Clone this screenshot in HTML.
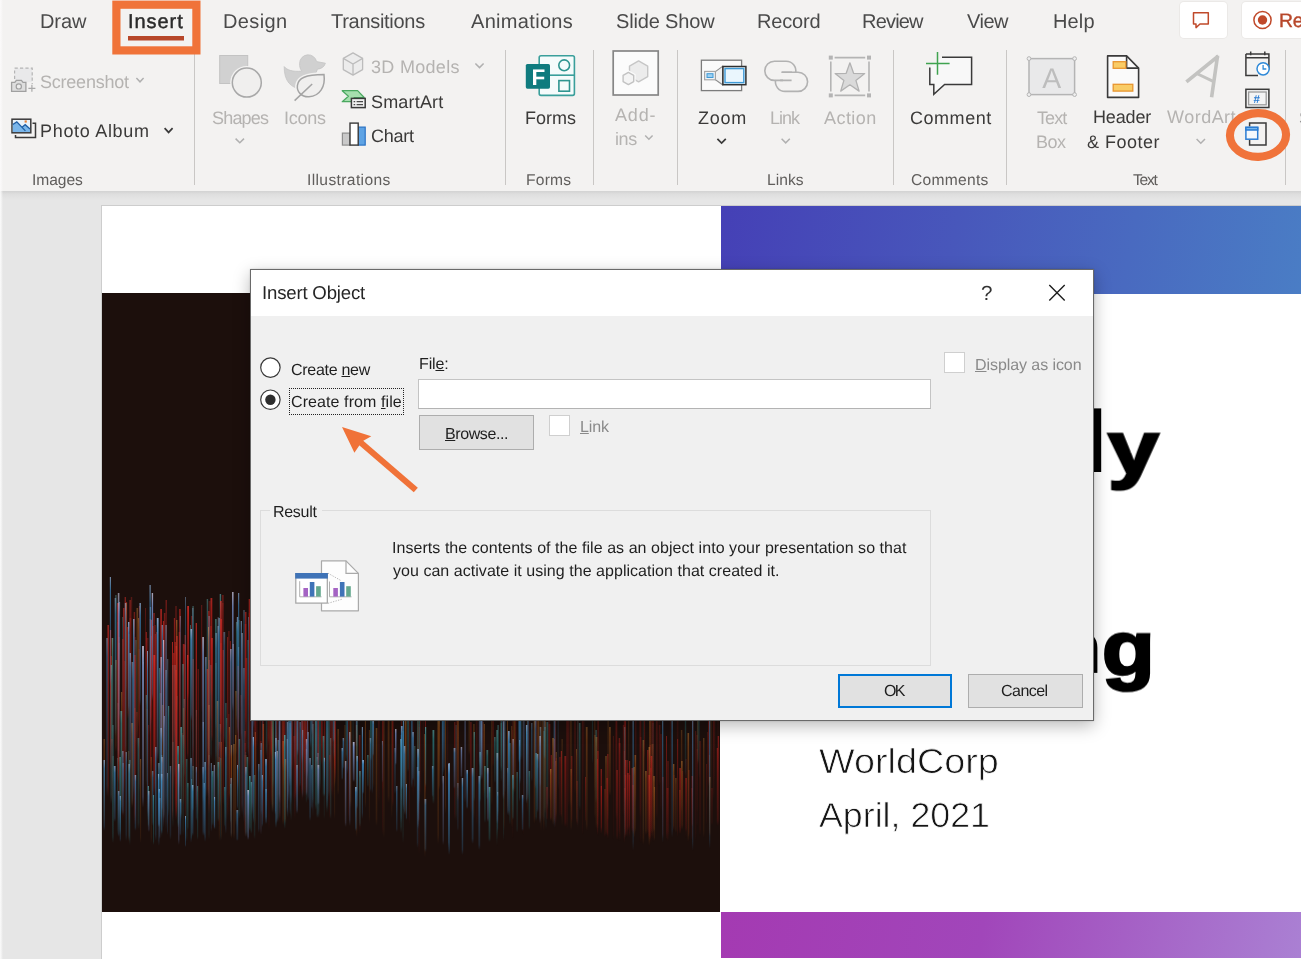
<!DOCTYPE html>
<html lang="en">
<head>
<meta charset="utf-8">
<title>Insert Object</title>
<style>
html,body{margin:0;padding:0;}
body{width:1301px;height:959px;overflow:hidden;position:relative;background:#e6e6e6;font-family:"Liberation Sans",sans-serif;text-rendering:geometricPrecision;}
.t{position:absolute;white-space:pre;display:block;will-change:transform;}
.t u{text-decoration:underline;text-decoration-thickness:1px;text-underline-offset:1px;}
.abs{position:absolute;}
#ribbon{position:absolute;left:0;top:0;width:1301px;height:191px;background:#f3f2f1;}
#ribshadow{position:absolute;left:0;top:191px;width:1301px;height:9px;background:linear-gradient(#d2d2d2,#dedede 35%,#e6e6e6);}
.sep{position:absolute;width:1px;background:#c9c7c5;top:50px;height:135px;}
#slide{position:absolute;left:102px;top:206px;width:1199px;height:753px;background:#fff;overflow:hidden;}
#dialog{position:absolute;left:250px;top:269px;width:844px;height:452px;box-sizing:border-box;background:#f0f0f0;border:1px solid #6a6a6a;box-shadow:0 5px 16px rgba(0,0,0,.27),0 0 2px rgba(0,0,0,.18);}
#dtitle{position:absolute;left:0;top:0;width:842px;height:46px;background:#fff;}
.btn{position:absolute;box-sizing:border-box;background:#e1e1e1;border:1px solid #adadad;}
.cb{position:absolute;box-sizing:border-box;background:#fff;border:1px solid #cfcfcf;}
</style>
</head>
<body>
<div id="ribbon"></div>
<div id="ribshadow"></div>
<div class="abs" style="left:1180px;top:2px;width:47px;height:36px;background:#fff;border-radius:4px;box-shadow:0 0 0 1px #ebe9e7;"></div>
<div class="abs" style="left:1242px;top:2px;width:70px;height:36px;background:#fff;border-radius:4px;box-shadow:0 0 0 1px #ebe9e7;"></div>
<svg class="abs" style="left:0;top:0;will-change:transform;" width="1301" height="191" viewBox="0 0 1301 191" font-family="Liberation Sans, sans-serif">
<!-- top-right buttons -->
<path d="M1193.5 12.8 h14.8 v11.2 h-8.3 l-4 3.6 v-3.6 h-2.5 z" fill="none" stroke="#c0492a" stroke-width="1.5" stroke-linejoin="round"/>
<circle cx="1262.5" cy="20" r="8.6" fill="none" stroke="#c0492a" stroke-width="1.5"/><circle cx="1262.5" cy="20" r="4.7" fill="#c0492a"/>
<!-- Screenshot -->
<g stroke="#a9a9a9" fill="none" stroke-width="1.2">
<rect x="14.6" y="68.2" width="17.6" height="14" fill="#e9e9ea" stroke="none"/>
<path d="M14.6 79 V68.2 H32.2 V84" stroke-dasharray="3.2 2.2" stroke="#b4b4b4"/>
<path d="M11.6 82.3 h3.2 l1.6 -2 h5 l1.6 2 h2.9 v9 h-14.3 z" fill="#dedede" stroke="#a0a0a0" stroke-width="1.3"/>
<circle cx="18.8" cy="86.4" r="2.6" fill="#ececec" stroke="#a0a0a0" stroke-width="1.2"/>
<path d="M28.4 88.3 h7 M31.9 84.8 v7" stroke="#a9a9a9" stroke-width="1.2"/>
</g>
<!-- Photo Album -->
<path d="M15.5 135 v2.6 h20 v-14.4 h-3" fill="none" stroke="#3a3a3a" stroke-width="1.5"/>
<rect x="12" y="119.2" width="18.8" height="13.6" fill="#eaf3fb" stroke="#3a3a3a" stroke-width="1.5"/>
<path d="M12.8 124.5 l4 -2.6 l5.2 5.4 l3.2 -2.6 l4.8 4.2 v3.2 h-17.2 z" fill="#7ab6ea"/>
<path d="M12.8 124.5 l4 -2.6 l8.6 9 M19.5 127.8 M22 127.3 l3.2 -2.6 l4.8 4.2" fill="none" stroke="#1f5fa6" stroke-width="1.3"/>
<rect x="24.6" y="120.4" width="2.2" height="2.2" fill="#e8823a"/>
<!-- Shapes -->
<rect x="219.7" y="55.5" width="28" height="28" fill="#d1d1d1" stroke="#c3c3c3" stroke-width="1"/>
<circle cx="246.8" cy="82.6" r="16.6" fill="#f3f2f1"/>
<circle cx="246.8" cy="82.6" r="14.5" fill="#f0efee" stroke="#a8a8a8" stroke-width="1.5"/>
<!-- Icons (duck + leaf) -->
<path d="M284.2 66.6 c3 3.6 8 5.2 17.6 4.6 c-1.6 -2 -2.4 -4.8 -2.2 -8 a8.6 8.6 0 0 1 17 -1.6 l8.8 1.6 c-1 3.6 -4 5.600 -8 6 c-0.600 2.4 -1.6 4 -3.4 5.400 l-12 14.6 c-11 -1 -18 -8 -17.800 -22.600 z" fill="#d0d0d0" stroke="#c4c4c4" stroke-width="0.8"/>
<path d="M324 74.600 c1.600 12 -4 21.400 -15 22.200 c-7.400 0.400 -12.400 -5 -11.600 -11.400 c1 -7.600 8 -10.600 26.600 -10.800 z" fill="#f0efee" stroke="#f3f2f1" stroke-width="4.5"/>
<path d="M324 74.600 c1.600 12 -4 21.400 -15 22.200 c-7.400 0.400 -12.400 -5 -11.600 -11.400 c1 -7.600 8 -10.600 26.600 -10.800 z" fill="#f0efee" stroke="#a4a4a4" stroke-width="1.5"/>
<path d="M312.200 84 L294.600 100.600" stroke="#a4a4a4" stroke-width="1.5" fill="none"/>
<!-- 3D models cube -->
<path d="M353 52.900 l9.600 5.500 v11.200 l-9.600 5.500 l-9.700 -5.500 v-11.200 z" fill="#ececec" stroke="#bcbcbc" stroke-width="1.3" stroke-linejoin="round"/>
<path d="M343.300 58.400 l9.700 5.600 l9.600 -5.600 M353 64 v11.100" fill="none" stroke="#bcbcbc" stroke-width="1.3"/>
<!-- SmartArt -->
<path d="M342.200 90.700 h15.400 l6.600 6.800 h-10 l-1.600 4.200 h-10.400 l6.200 -5.500 z" fill="#a6dfae" stroke="#4aa860" stroke-width="1.2" stroke-linejoin="round"/>
<rect x="351.400" y="98.400" width="13.800" height="9.200" fill="#f1f1f1" stroke="#3a3a3a" stroke-width="1.5"/>
<path d="M353.600 101.600 h1.600 M356.600 101.600 h6.400 M353.600 104.600 h1.600 M356.600 104.600 h6.400" stroke="#4a4a4a" stroke-width="1.100" fill="none"/>
<!-- Chart -->
<rect x="342.400" y="133.100" width="7.600" height="12" fill="#c9c9c9" stroke="#8e8e8e" stroke-width="1.2"/>
<rect x="358.200" y="127.100" width="7" height="18" fill="#5ea3e4" stroke="#2b72c4" stroke-width="1.2"/>
<rect x="350" y="123.100" width="8.200" height="22" fill="#fff" stroke="#3a3a3a" stroke-width="1.4"/>
<!-- Forms -->
<rect x="539.200" y="55.800" width="35.200" height="39.600" rx="1.800" fill="#f5fbfb" stroke="#3a9f9b" stroke-width="1.600"/>
<path d="M548 75.200 h26.400" stroke="#3a9f9b" stroke-width="1.600"/>
<circle cx="564.200" cy="65.300" r="5.400" fill="none" stroke="#2f9590" stroke-width="1.600"/>
<rect x="558.900" y="80.600" width="10.600" height="10.600" fill="none" stroke="#2f9590" stroke-width="1.600"/>
<rect x="525.800" y="64" width="24.200" height="24.700" rx="1.600" fill="#0f7b7e"/>
<text x="531.600" y="84.500" font-size="22.500" font-weight="bold" fill="#fff">F</text>
<!-- Add-ins -->
<rect x="613.200" y="51" width="45" height="44" fill="#fbfbfb" stroke="#868686" stroke-width="1.700"/>
<path d="M638.600 60.900 l9.100 5.250 v10.500 l-9.100 5.250 l-9.100 -5.250 v-10.500 z" fill="#ececec" stroke="#c6c6c6" stroke-width="1.400" stroke-linejoin="round"/>
<path d="M628.400 72.400 l5.300 3.050 v6.100 l-5.300 3.050 l-5.300 -3.050 v-6.100 z" fill="#f4f4f4" stroke="#fbfbfb" stroke-width="4"/>
<path d="M628.400 72.400 l5.300 3.050 v6.100 l-5.300 3.050 l-5.300 -3.050 v-6.100 z" fill="#f4f4f4" stroke="#c2c2c2" stroke-width="1.400" stroke-linejoin="round"/>
<!-- Zoom -->
<rect x="701.400" y="60.200" width="40.200" height="30.400" fill="#fafafa" stroke="#7c7c7c" stroke-width="1.300"/>
<path d="M715.400 71.600 L722.600 66.400 V84.800 L715.400 79.600 Z" fill="#f0f0f0" stroke="#8e8e8e" stroke-width="1.100"/>
<rect x="704.600" y="71.400" width="10.800" height="8.400" fill="#eef3f7" stroke="#a2a2a2" stroke-width="1.100"/>
<rect x="707" y="73.700" width="6" height="3.800" fill="#9fd0f0" stroke="#3f9ad6" stroke-width="1"/>
<rect x="722.900" y="66.500" width="23" height="18.200" fill="#e8f5fd" stroke="#303030" stroke-width="1.500"/>
<rect x="725" y="68.600" width="18.800" height="14" fill="#eaf6fd" stroke="#3f9ad6" stroke-width="1.400"/>
<!-- Link -->
<g fill="none" stroke="#b2b2b2" stroke-width="1.600">
<path d="M783 80.400 h-8.600 a9.600 9.600 0 0 1 0 -19.200 h11.800 a9.600 9.600 0 0 1 9.400 11.600"/>
<path d="M781.600 72.200 h16.400 a9.600 9.600 0 0 1 0 19.200 h-13 a9.600 9.600 0 0 1 -9.400 -11.400"/>
<path d="M791.600 80.400 h-11.500 M781.600 72.200 h10.400"/>
</g>
<!-- Action -->
<g stroke="#b4b4b4" stroke-width="1.600" fill="none">
<path d="M834.600 57.600 h30.600 M834.600 95.400 h30.600 M830.800 61.400 v30.200 M869 61.400 v30.200"/>
</g>
<g fill="#b4b4b4"><rect x="828.800" y="55.600" width="4" height="4"/><rect x="867" y="55.600" width="4" height="4"/><rect x="828.800" y="93.400" width="4" height="4"/><rect x="867" y="93.400" width="4" height="4"/></g>
<path d="M849.900 62.800 l3.700 10.500 l11.100 0.300 l-8.800 6.800 l3.200 10.700 l-9.200 -6.300 l-9.200 6.300 l3.200 -10.700 l-8.800 -6.800 l11.100 -0.300 z" fill="#dadada" stroke="#b2b2b2" stroke-width="1.300" stroke-linejoin="round"/>
<!-- Comment -->
<path d="M942 57.300 h29.600 v27.200 h-27 l-10.800 9.800 v-9.800 h-4 v-17" fill="#f8f8f8" stroke="#3a3a3a" stroke-width="1.500" stroke-linejoin="miter"/>
<path d="M937.500 52 v22.800 M926 63.500 h23.600" stroke="#3fa34f" stroke-width="1.500" fill="none"/>
<!-- Text Box -->
<rect x="1029" y="58.600" width="45.600" height="36" fill="#e9e9ea" stroke="#b4b4b4" stroke-width="1.500"/>
<g fill="#efefef" stroke="#b4b4b4" stroke-width="1"><circle cx="1029" cy="58.600" r="1.900"/><circle cx="1074.600" cy="58.600" r="1.900"/><circle cx="1029" cy="94.600" r="1.900"/><circle cx="1074.600" cy="94.600" r="1.900"/></g>
<text x="1042.300" y="87.500" font-size="28.400" fill="#bdbdbd">A</text>
<!-- Header & Footer -->
<path d="M1107.600 55.900 h19 l12 12.200 v29.300 h-31 z" fill="#fafafa" stroke="#3a3a3a" stroke-width="1.600" stroke-linejoin="round"/>
<path d="M1126.600 55.900 v12.200 h12" fill="none" stroke="#3a3a3a" stroke-width="1.600" stroke-linejoin="round"/>
<rect x="1113.200" y="61.700" width="12.600" height="6.600" fill="#f9cc66" stroke="#e89530" stroke-width="1.300"/>
<rect x="1113.200" y="84.300" width="19.600" height="6.800" fill="#f9cc66" stroke="#e89530" stroke-width="1.300"/>
<!-- WordArt A -->
<path d="M1218.400 56 L1186.400 81.800 M1217.600 55.600 L1211.600 97.200" stroke="#c3c3c1" stroke-width="3.600" fill="none" stroke-linecap="butt"/><path d="M1196.700 73.500 L1213.700 81.700" stroke="#c3c3c1" stroke-width="3" fill="none"/>
<!-- date/time -->
<path d="M1245.900 53.900 h23 v15.600 M1258 75.600 h-12.100 v-21.700 M1245.900 57.700 h23 M1250.700 51.600 v3.600 M1264.800 51.600 v3.600" fill="none" stroke="#3a3a3a" stroke-width="1.500"/>
<circle cx="1263.100" cy="68.800" r="6.100" fill="#fff" stroke="#2f8ad8" stroke-width="1.500"/>
<path d="M1263.100 65 v4 h3.200" fill="none" stroke="#2f8ad8" stroke-width="1.300"/>
<!-- slide number -->
<rect x="1245.900" y="89.300" width="23" height="18.200" fill="#f4f4f4" stroke="#3a3a3a" stroke-width="1.500"/>
<rect x="1248.600" y="92" width="17.600" height="12.800" fill="#f4f4f4" stroke="#9c9c9c" stroke-width="1.300"/>
<text x="1253.600" y="102.600" font-size="11.500" font-weight="bold" fill="#2b7cd3">#</text>
<!-- object -->
<path d="M1249.600 126.500 v-3.600 h16.400 v22.200 h-16.400 v-5" fill="none" stroke="#3a3a3a" stroke-width="1.500"/>
<rect x="1245.900" y="127.400" width="11.800" height="11.800" fill="#f4f8fc" stroke="#2b7cd3" stroke-width="1.500"/>
<rect x="1245.150" y="126.650" width="13.300" height="4.100" fill="#2b7cd3"/><rect x="1246.600" y="128.100" width="10.400" height="1.100" fill="#7fbdf0"/>
<!-- chevrons -->
<g fill="none" stroke-width="1.500">
<path d="M136.400 78 l3.600 3.800 l3.600 -3.800" stroke="#b0b0b0"/>
<path d="M164.600 128.200 l4 4.200 l4 -4.200" stroke="#3a3a3a" stroke-width="1.700"/>
<path d="M235.600 138.600 l4.200 4.200 l4.200 -4.200" stroke="#b0b0b0"/>
<path d="M475.400 63.400 l4.100 4.200 l4.100 -4.200" stroke="#b0b0b0"/>
<path d="M645.200 135.400 l3.700 3.800 l3.700 -3.800" stroke="#b0b0b0"/>
<path d="M717.400 138.800 l4.200 4.200 l4.200 -4.200" stroke="#3a3a3a" stroke-width="1.700"/>
<path d="M781.600 138.800 l4.100 4.100 l4.100 -4.100" stroke="#b0b0b0"/>
<path d="M1196.600 139 l4.200 4.200 l4.200 -4.200" stroke="#b0b0b0"/>
</g>
</svg>

<div class="sep" style="left:194px;"></div>
<div class="sep" style="left:505px;"></div>
<div class="sep" style="left:593px;"></div>
<div class="sep" style="left:677px;"></div>
<div class="sep" style="left:893px;"></div>
<div class="sep" style="left:1006px;"></div>
<div class="sep" style="left:1285px;"></div>
<span class="t g-ribbon" style="left:40.00px;top:12.20px;font-size:20px;line-height:20px;letter-spacing:-0.076px;color:#4a4a4a;">Draw</span>
<span class="t g-ribbon" style="left:223.00px;top:12.20px;font-size:20px;line-height:20px;letter-spacing:0.373px;color:#4a4a4a;">Design</span>
<span class="t g-ribbon" style="left:330.80px;top:12.20px;font-size:20px;line-height:20px;letter-spacing:-0.287px;color:#4a4a4a;">Transitions</span>
<span class="t g-ribbon" style="left:470.60px;top:12.20px;font-size:20px;line-height:20px;letter-spacing:0.318px;color:#4a4a4a;">Animations</span>
<span class="t g-ribbon" style="left:616.40px;top:12.20px;font-size:20px;line-height:20px;letter-spacing:-0.157px;color:#4a4a4a;">Slide Show</span>
<span class="t g-ribbon" style="left:756.80px;top:12.20px;font-size:20px;line-height:20px;letter-spacing:-0.190px;color:#4a4a4a;">Record</span>
<span class="t g-ribbon" style="left:861.80px;top:12.20px;font-size:20px;line-height:20px;letter-spacing:-0.807px;color:#4a4a4a;">Review</span>
<span class="t g-ribbon" style="left:967.40px;top:12.20px;font-size:20px;line-height:20px;letter-spacing:-0.515px;color:#4a4a4a;">View</span>
<span class="t g-ribbon" style="left:1052.80px;top:12.20px;font-size:20px;line-height:20px;letter-spacing:0.130px;color:#4a4a4a;">Help</span>
<span class="t g-ribbon" style="left:128.00px;top:11.80px;font-size:20px;line-height:20px;letter-spacing:0.947px;color:#2b2b2b;-webkit-text-stroke:0.45px #2b2b2b;">Insert</span>
<span class="t g-ribbon" style="left:1279.00px;top:12.10px;font-size:19.4px;line-height:19.4px;letter-spacing:0.000px;color:#b7472a;-webkit-text-stroke:0.4px #b7472a;letter-spacing:-0.3px;">Record</span>
<span class="t g-ribbon" style="left:40.00px;top:72.50px;font-size:18px;line-height:18px;letter-spacing:-0.228px;color:#b5b3b1;">Screenshot</span>
<span class="t g-ribbon" style="left:39.50px;top:122.00px;font-size:18px;line-height:18px;letter-spacing:0.693px;color:#3b3a39;">Photo Album</span>
<span class="t g-ribbon" style="left:211.75px;top:108.75px;font-size:18px;line-height:18px;letter-spacing:-0.810px;color:#b5b3b1;">Shapes</span>
<span class="t g-ribbon" style="left:284.00px;top:108.75px;font-size:18px;line-height:18px;letter-spacing:-0.256px;color:#b5b3b1;">Icons</span>
<span class="t g-ribbon" style="left:370.75px;top:57.50px;font-size:18px;line-height:18px;letter-spacing:0.308px;color:#b5b3b1;">3D Models</span>
<span class="t g-ribbon" style="left:370.75px;top:92.50px;font-size:18px;line-height:18px;letter-spacing:0.178px;color:#3b3a39;">SmartArt</span>
<span class="t g-ribbon" style="left:370.75px;top:127.00px;font-size:18px;line-height:18px;letter-spacing:-0.254px;color:#3b3a39;">Chart</span>
<span class="t g-ribbon" style="left:524.50px;top:108.75px;font-size:18px;line-height:18px;letter-spacing:0.001px;color:#3b3a39;">Forms</span>
<span class="t g-ribbon" style="left:615.00px;top:106.25px;font-size:18px;line-height:18px;letter-spacing:0.824px;color:#b5b3b1;">Add-</span>
<span class="t g-ribbon" style="left:614.75px;top:130.00px;font-size:18px;line-height:18px;letter-spacing:-0.380px;color:#b5b3b1;">ins</span>
<span class="t g-ribbon" style="left:698.25px;top:108.75px;font-size:18px;line-height:18px;letter-spacing:0.744px;color:#3b3a39;">Zoom</span>
<span class="t g-ribbon" style="left:769.75px;top:108.75px;font-size:18px;line-height:18px;letter-spacing:-1.007px;color:#b5b3b1;">Link</span>
<span class="t g-ribbon" style="left:823.75px;top:108.75px;font-size:18px;line-height:18px;letter-spacing:0.447px;color:#b5b3b1;">Action</span>
<span class="t g-ribbon" style="left:910.00px;top:108.75px;font-size:18px;line-height:18px;letter-spacing:0.538px;color:#3b3a39;">Comment</span>
<span class="t g-ribbon" style="left:1036.75px;top:108.75px;font-size:18px;line-height:18px;letter-spacing:-0.920px;color:#b5b3b1;">Text</span>
<span class="t g-ribbon" style="left:1035.75px;top:133.00px;font-size:18px;line-height:18px;letter-spacing:-0.508px;color:#b5b3b1;">Box</span>
<span class="t g-ribbon" style="left:1093.40px;top:108.20px;font-size:18px;line-height:18px;letter-spacing:-0.148px;color:#3b3a39;">Header</span>
<span class="t g-ribbon" style="left:1087.10px;top:133.00px;font-size:18px;line-height:18px;letter-spacing:0.495px;color:#3b3a39;">&amp; Footer</span>
<span class="t g-ribbon" style="left:1167.40px;top:108.20px;font-size:18px;line-height:18px;letter-spacing:0.487px;color:#b5b3b1;">WordArt</span>
<span class="t g-ribbon" style="left:1298.60px;top:108.60px;font-size:18px;line-height:18px;letter-spacing:0.000px;color:#8f8f8f;">Symbols</span>
<span class="t g-ribbon" style="left:32.00px;top:172.70px;font-size:15.6px;line-height:15.6px;letter-spacing:-0.068px;color:#605e5c;">Images</span>
<span class="t g-ribbon" style="left:307.00px;top:172.70px;font-size:15.6px;line-height:15.6px;letter-spacing:0.369px;color:#605e5c;">Illustrations</span>
<span class="t g-ribbon" style="left:526.00px;top:172.70px;font-size:15.6px;line-height:15.6px;letter-spacing:0.217px;color:#605e5c;">Forms</span>
<span class="t g-ribbon" style="left:766.50px;top:172.70px;font-size:15.6px;line-height:15.6px;letter-spacing:0.036px;color:#605e5c;">Links</span>
<span class="t g-ribbon" style="left:910.75px;top:172.70px;font-size:15.6px;line-height:15.6px;letter-spacing:0.273px;color:#605e5c;">Comments</span>
<span class="t g-ribbon" style="left:1132.50px;top:172.70px;font-size:15.6px;line-height:15.6px;letter-spacing:-1.255px;color:#605e5c;">Text</span>
<div class="abs" style="left:0;top:0;width:3px;height:959px;background:linear-gradient(90deg,#fafafa,rgba(250,250,250,.6) 45%,rgba(250,250,250,0));"></div>
<div class="abs" style="left:101px;top:205px;width:1200px;height:754px;background:#cdcdcd;"></div>
<div id="slide">
  <div class="abs" style="left:619px;top:0;width:580px;height:88px;background:linear-gradient(100deg,#4540b6 0%,#4857bb 40%,#4a7dc5 100%);"></div>
  <div class="abs" style="left:619px;top:706px;width:580px;height:46px;background:linear-gradient(100deg,#a43ab2 0%,#a146ba 45%,#aa80d3 100%);"></div>
  <div class="abs" style="left:0;top:87px;width:618px;height:619px;background:#1c0f0c;overflow:hidden;"><svg width="618" height="619" viewBox="102 293 618 619" style="position:absolute;left:0;top:0"><defs>
<linearGradient id="sr" x1="0" y1="0" x2="0" y2="1"><stop offset="0" stop-color="#e0302a" stop-opacity=".9"/><stop offset=".12" stop-color="#c3201b" stop-opacity="1"/><stop offset=".6" stop-color="#c3201b" stop-opacity=".55"/><stop offset=".93" stop-color="#c3201b" stop-opacity=".3"/><stop offset="1" stop-color="#c3201b" stop-opacity="0"/></linearGradient>
<linearGradient id="sb" x1="0" y1="0" x2="0" y2="1"><stop offset="0" stop-color="#9ec4ee" stop-opacity=".9"/><stop offset=".12" stop-color="#3a86bd" stop-opacity="1"/><stop offset=".6" stop-color="#3a86bd" stop-opacity=".55"/><stop offset=".93" stop-color="#3a86bd" stop-opacity=".3"/><stop offset="1" stop-color="#3a86bd" stop-opacity="0"/></linearGradient>
<linearGradient id="sl" x1="0" y1="0" x2="0" y2="1"><stop offset="0" stop-color="#e6e4ff" stop-opacity=".9"/><stop offset=".12" stop-color="#7f9fe0" stop-opacity="1"/><stop offset=".6" stop-color="#7f9fe0" stop-opacity=".55"/><stop offset=".93" stop-color="#7f9fe0" stop-opacity=".3"/><stop offset="1" stop-color="#7f9fe0" stop-opacity="0"/></linearGradient>
<linearGradient id="st" x1="0" y1="0" x2="0" y2="1"><stop offset="0" stop-color="#5fb0b0" stop-opacity=".9"/><stop offset=".12" stop-color="#2b8084" stop-opacity="1"/><stop offset=".6" stop-color="#2b8084" stop-opacity=".55"/><stop offset=".93" stop-color="#2b8084" stop-opacity=".3"/><stop offset="1" stop-color="#2b8084" stop-opacity="0"/></linearGradient>
<linearGradient id="so" x1="0" y1="0" x2="0" y2="1"><stop offset="0" stop-color="#d88a3a" stop-opacity=".9"/><stop offset=".12" stop-color="#a85a1c" stop-opacity="1"/><stop offset=".6" stop-color="#a85a1c" stop-opacity=".55"/><stop offset=".93" stop-color="#a85a1c" stop-opacity=".3"/><stop offset="1" stop-color="#a85a1c" stop-opacity="0"/></linearGradient>
<linearGradient id="sd" x1="0" y1="0" x2="0" y2="1"><stop offset="0" stop-color="#a02420" stop-opacity=".9"/><stop offset=".12" stop-color="#6e1714" stop-opacity="1"/><stop offset=".6" stop-color="#6e1714" stop-opacity=".55"/><stop offset=".93" stop-color="#6e1714" stop-opacity=".3"/><stop offset="1" stop-color="#6e1714" stop-opacity="0"/></linearGradient>
</defs>
<rect x="642.6" y="709" width="1.2" height="127" fill="url(#st)" opacity="0.20"/>
<rect x="717.3" y="707" width="1.6" height="66" fill="url(#sd)" opacity="0.21"/>
<rect x="691.9" y="698" width="1.6" height="92" fill="url(#sr)" opacity="0.21"/>
<rect x="660.3" y="734" width="1.4" height="77" fill="url(#sr)" opacity="0.22"/>
<rect x="669.8" y="713" width="1.2" height="112" fill="url(#sd)" opacity="0.22"/>
<rect x="712.8" y="712" width="1.6" height="87" fill="url(#sr)" opacity="0.22"/>
<rect x="655.9" y="720" width="1.8" height="99" fill="url(#sr)" opacity="0.23"/>
<rect x="649.6" y="691" width="1.8" height="84" fill="url(#so)" opacity="0.23"/>
<rect x="576.4" y="781" width="1.6" height="44" fill="url(#sr)" opacity="0.25"/>
<rect x="635.3" y="713" width="1" height="89" fill="url(#sr)" opacity="0.25"/>
<rect x="481.6" y="702" width="0.9" height="66" fill="url(#sd)" opacity="0.26"/>
<rect x="681.8" y="771" width="1.4" height="58" fill="url(#sr)" opacity="0.26"/>
<rect x="412.3" y="698" width="1.8" height="99" fill="url(#sd)" opacity="0.26"/>
<rect x="482.7" y="722" width="1.2" height="76" fill="url(#so)" opacity="0.26"/>
<rect x="685.4" y="759" width="1.4" height="79" fill="url(#sd)" opacity="0.26"/>
<rect x="649.5" y="745" width="1.8" height="98" fill="url(#sr)" opacity="0.26"/>
<rect x="594.2" y="735" width="1.6" height="84" fill="url(#so)" opacity="0.27"/>
<rect x="568.2" y="717" width="1.2" height="90" fill="url(#sr)" opacity="0.27"/>
<rect x="570.0" y="707" width="1.8" height="100" fill="url(#so)" opacity="0.27"/>
<rect x="457.6" y="690" width="1.4" height="113" fill="url(#sd)" opacity="0.28"/>
<rect x="539.5" y="693" width="1.8" height="130" fill="url(#so)" opacity="0.28"/>
<rect x="650.0" y="716" width="1.6" height="118" fill="url(#sd)" opacity="0.28"/>
<rect x="666.7" y="788" width="1.8" height="53" fill="url(#sr)" opacity="0.28"/>
<rect x="561.6" y="739" width="1" height="87" fill="url(#so)" opacity="0.28"/>
<rect x="713.5" y="716" width="1.8" height="65" fill="url(#sd)" opacity="0.29"/>
<rect x="541.7" y="714" width="1.4" height="108" fill="url(#so)" opacity="0.29"/>
<rect x="649.8" y="702" width="1.6" height="75" fill="url(#so)" opacity="0.29"/>
<rect x="544.6" y="697" width="0.9" height="78" fill="url(#sr)" opacity="0.29"/>
<rect x="528.1" y="709" width="1.8" height="63" fill="url(#sd)" opacity="0.29"/>
<rect x="708.9" y="755" width="0.9" height="80" fill="url(#so)" opacity="0.29"/>
<rect x="680.9" y="730" width="1.4" height="82" fill="url(#so)" opacity="0.29"/>
<rect x="650.1" y="768" width="1.2" height="72" fill="url(#sr)" opacity="0.30"/>
<rect x="667.3" y="761" width="1.4" height="75" fill="url(#sr)" opacity="0.30"/>
<rect x="555.0" y="761" width="1.2" height="58" fill="url(#so)" opacity="0.30"/>
<rect x="512.3" y="730" width="0.9" height="109" fill="url(#sd)" opacity="0.30"/>
<rect x="482.3" y="703" width="1.8" height="62" fill="url(#sd)" opacity="0.30"/>
<rect x="555.7" y="758" width="0.9" height="65" fill="url(#sr)" opacity="0.31"/>
<rect x="473.1" y="724" width="1.6" height="95" fill="url(#so)" opacity="0.31"/>
<rect x="597.7" y="706" width="1" height="114" fill="url(#sr)" opacity="0.31"/>
<rect x="607.6" y="718" width="1" height="104" fill="url(#so)" opacity="0.31"/>
<rect x="368.9" y="730" width="0.9" height="93" fill="url(#so)" opacity="0.32"/>
<rect x="566.4" y="707" width="1.4" height="122" fill="url(#sr)" opacity="0.32"/>
<rect x="628.8" y="775" width="1.4" height="62" fill="url(#sr)" opacity="0.32"/>
<rect x="652.5" y="723" width="1" height="78" fill="url(#st)" opacity="0.32"/>
<rect x="658.7" y="711" width="0.9" height="75" fill="url(#sd)" opacity="0.32"/>
<rect x="570.9" y="756" width="1.6" height="67" fill="url(#sr)" opacity="0.32"/>
<rect x="540.5" y="727" width="1" height="104" fill="url(#so)" opacity="0.33"/>
<rect x="337.4" y="729" width="1.6" height="66" fill="url(#so)" opacity="0.33"/>
<rect x="348.0" y="701" width="1.2" height="120" fill="url(#sr)" opacity="0.33"/>
<rect x="623.4" y="703" width="1.8" height="86" fill="url(#sd)" opacity="0.33"/>
<rect x="422.5" y="703" width="1.4" height="71" fill="url(#sd)" opacity="0.33"/>
<rect x="643.5" y="704" width="1.4" height="74" fill="url(#sd)" opacity="0.33"/>
<rect x="597.3" y="709" width="1.2" height="127" fill="url(#sd)" opacity="0.33"/>
<rect x="639.5" y="694" width="1.8" height="123" fill="url(#sr)" opacity="0.33"/>
<rect x="615.5" y="707" width="1.8" height="113" fill="url(#sr)" opacity="0.34"/>
<rect x="344.5" y="725" width="0.9" height="101" fill="url(#so)" opacity="0.34"/>
<rect x="707.1" y="732" width="1" height="67" fill="url(#sd)" opacity="0.34"/>
<rect x="496.3" y="730" width="1.2" height="116" fill="url(#st)" opacity="0.34"/>
<rect x="574.4" y="701" width="1.2" height="93" fill="url(#sr)" opacity="0.34"/>
<rect x="696.4" y="735" width="1.2" height="77" fill="url(#sd)" opacity="0.34"/>
<rect x="651.7" y="744" width="1.8" height="94" fill="url(#so)" opacity="0.34"/>
<rect x="372.7" y="714" width="1.6" height="74" fill="url(#so)" opacity="0.34"/>
<rect x="391.3" y="703" width="1" height="115" fill="url(#so)" opacity="0.34"/>
<rect x="673.6" y="775" width="0.9" height="57" fill="url(#sd)" opacity="0.34"/>
<rect x="658.9" y="725" width="1.6" height="60" fill="url(#sd)" opacity="0.34"/>
<rect x="417.2" y="712" width="1.6" height="116" fill="url(#so)" opacity="0.35"/>
<rect x="491.2" y="709" width="1.2" height="97" fill="url(#so)" opacity="0.35"/>
<rect x="591.9" y="694" width="1.2" height="70" fill="url(#st)" opacity="0.35"/>
<rect x="492.5" y="706" width="1.4" height="61" fill="url(#sr)" opacity="0.35"/>
<rect x="595.2" y="730" width="1.8" height="73" fill="url(#st)" opacity="0.35"/>
<rect x="402.3" y="731" width="1.6" height="112" fill="url(#st)" opacity="0.35"/>
<rect x="623.8" y="751" width="1.2" height="92" fill="url(#sr)" opacity="0.35"/>
<rect x="711.5" y="788" width="0.9" height="37" fill="url(#sr)" opacity="0.35"/>
<rect x="676.8" y="706" width="1.6" height="70" fill="url(#sd)" opacity="0.35"/>
<rect x="628.2" y="710" width="1" height="61" fill="url(#so)" opacity="0.35"/>
<rect x="455.5" y="725" width="1.4" height="96" fill="url(#st)" opacity="0.35"/>
<rect x="639.8" y="737" width="1.6" height="106" fill="url(#sd)" opacity="0.35"/>
<rect x="706.1" y="764" width="1" height="61" fill="url(#sd)" opacity="0.36"/>
<rect x="228.1" y="714" width="1.4" height="103" fill="url(#sd)" opacity="0.36"/>
<rect x="128.3" y="751" width="0.9" height="92" fill="url(#so)" opacity="0.36"/>
<rect x="112.1" y="756" width="1.6" height="87" fill="url(#st)" opacity="0.36"/>
<rect x="577.4" y="708" width="1" height="119" fill="url(#st)" opacity="0.36"/>
<rect x="624.8" y="775" width="1.4" height="63" fill="url(#sr)" opacity="0.36"/>
<rect x="612.9" y="736" width="0.9" height="104" fill="url(#sd)" opacity="0.36"/>
<rect x="577.1" y="701" width="1.2" height="128" fill="url(#sd)" opacity="0.36"/>
<rect x="649.1" y="721" width="1" height="99" fill="url(#so)" opacity="0.37"/>
<rect x="710.6" y="712" width="0.9" height="80" fill="url(#so)" opacity="0.37"/>
<rect x="418.4" y="724" width="1.4" height="130" fill="url(#sd)" opacity="0.37"/>
<rect x="697.0" y="702" width="1.4" height="63" fill="url(#so)" opacity="0.37"/>
<rect x="323.8" y="757" width="0.9" height="62" fill="url(#st)" opacity="0.37"/>
<rect x="675.2" y="778" width="1.4" height="55" fill="url(#so)" opacity="0.37"/>
<rect x="280.9" y="693" width="0.9" height="63" fill="url(#sd)" opacity="0.37"/>
<rect x="475.8" y="703" width="1.8" height="123" fill="url(#sd)" opacity="0.37"/>
<rect x="698.8" y="694" width="0.9" height="85" fill="url(#st)" opacity="0.37"/>
<rect x="244.6" y="755" width="1.8" height="82" fill="url(#so)" opacity="0.37"/>
<rect x="644.1" y="697" width="1" height="61" fill="url(#sr)" opacity="0.37"/>
<rect x="447.2" y="707" width="1" height="83" fill="url(#sd)" opacity="0.38"/>
<rect x="526.8" y="715" width="0.9" height="97" fill="url(#so)" opacity="0.38"/>
<rect x="651.8" y="695" width="1.6" height="62" fill="url(#sr)" opacity="0.38"/>
<rect x="604.3" y="789" width="1.2" height="48" fill="url(#sr)" opacity="0.38"/>
<rect x="570.5" y="769" width="1.2" height="61" fill="url(#so)" opacity="0.38"/>
<rect x="684.8" y="713" width="1.4" height="63" fill="url(#st)" opacity="0.38"/>
<rect x="585.0" y="777" width="1" height="45" fill="url(#sr)" opacity="0.38"/>
<rect x="146.5" y="709" width="1.2" height="106" fill="url(#sd)" opacity="0.39"/>
<rect x="219.9" y="758" width="1.4" height="83" fill="url(#st)" opacity="0.39"/>
<rect x="652.3" y="717" width="1.6" height="125" fill="url(#sd)" opacity="0.39"/>
<rect x="352.6" y="692" width="0.9" height="83" fill="url(#st)" opacity="0.39"/>
<rect x="679.4" y="790" width="0.9" height="39" fill="url(#so)" opacity="0.39"/>
<rect x="103.5" y="739" width="1.4" height="86" fill="url(#so)" opacity="0.39"/>
<rect x="303.3" y="693" width="0.9" height="103" fill="url(#so)" opacity="0.39"/>
<rect x="594.4" y="696" width="0.9" height="96" fill="url(#so)" opacity="0.40"/>
<rect x="677.1" y="739" width="1" height="98" fill="url(#sr)" opacity="0.40"/>
<rect x="185.7" y="759" width="1.8" height="83" fill="url(#st)" opacity="0.40"/>
<rect x="159.7" y="693" width="1.8" height="93" fill="url(#st)" opacity="0.40"/>
<rect x="245.1" y="752" width="1" height="66" fill="url(#st)" opacity="0.40"/>
<rect x="595.6" y="737" width="1.8" height="92" fill="url(#so)" opacity="0.40"/>
<rect x="582.1" y="717" width="1" height="118" fill="url(#sd)" opacity="0.40"/>
<rect x="688.4" y="770" width="1" height="67" fill="url(#sr)" opacity="0.40"/>
<rect x="691.6" y="788" width="0.9" height="52" fill="url(#sr)" opacity="0.40"/>
<rect x="618.7" y="738" width="1.4" height="96" fill="url(#sr)" opacity="0.40"/>
<rect x="387.7" y="698" width="1.8" height="105" fill="url(#so)" opacity="0.41"/>
<rect x="218.8" y="757" width="0.9" height="84" fill="url(#so)" opacity="0.41"/>
<rect x="522.9" y="720" width="0.9" height="115" fill="url(#sd)" opacity="0.41"/>
<rect x="201.2" y="605" width="1" height="108" fill="url(#sr)" opacity="0.41"/>
<rect x="161.8" y="705" width="1.8" height="115" fill="url(#so)" opacity="0.41"/>
<rect x="696.7" y="749" width="0.9" height="78" fill="url(#sd)" opacity="0.42"/>
<rect x="699.6" y="741" width="0.9" height="95" fill="url(#sr)" opacity="0.42"/>
<rect x="117.3" y="622" width="1.2" height="158" fill="url(#sd)" opacity="0.42"/>
<rect x="135.1" y="640" width="1.6" height="106" fill="url(#st)" opacity="0.42"/>
<rect x="221.0" y="742" width="0.9" height="98" fill="url(#so)" opacity="0.42"/>
<rect x="543.3" y="709" width="1" height="122" fill="url(#so)" opacity="0.42"/>
<rect x="653.9" y="787" width="1.2" height="54" fill="url(#so)" opacity="0.42"/>
<rect x="208.5" y="755" width="1" height="85" fill="url(#st)" opacity="0.42"/>
<rect x="134.7" y="660" width="0.9" height="124" fill="url(#sd)" opacity="0.42"/>
<rect x="327.4" y="656" width="1" height="145" fill="url(#sr)" opacity="0.42"/>
<rect x="622.8" y="725" width="1.6" height="91" fill="url(#sd)" opacity="0.42"/>
<rect x="142.9" y="662" width="0.9" height="126" fill="url(#so)" opacity="0.42"/>
<rect x="417.0" y="703" width="1.4" height="115" fill="url(#st)" opacity="0.42"/>
<rect x="110.5" y="656" width="1.6" height="96" fill="url(#sr)" opacity="0.42"/>
<rect x="154.1" y="625" width="1.6" height="133" fill="url(#sr)" opacity="0.42"/>
<rect x="290.4" y="716" width="1.4" height="105" fill="url(#st)" opacity="0.43"/>
<rect x="695.2" y="731" width="1" height="110" fill="url(#sd)" opacity="0.43"/>
<rect x="182.9" y="708" width="1.4" height="97" fill="url(#so)" opacity="0.43"/>
<rect x="305.7" y="698" width="1.8" height="78" fill="url(#sd)" opacity="0.43"/>
<rect x="334.2" y="720" width="0.9" height="99" fill="url(#so)" opacity="0.43"/>
<rect x="332.2" y="657" width="0.9" height="90" fill="url(#sr)" opacity="0.43"/>
<rect x="112.1" y="725" width="1.6" height="118" fill="url(#st)" opacity="0.43"/>
<rect x="375.7" y="728" width="1.6" height="98" fill="url(#so)" opacity="0.43"/>
<rect x="154.3" y="634" width="1.6" height="155" fill="url(#sr)" opacity="0.43"/>
<rect x="454.2" y="722" width="1.2" height="98" fill="url(#sr)" opacity="0.43"/>
<rect x="135.9" y="712" width="1.8" height="63" fill="url(#sd)" opacity="0.43"/>
<rect x="378.3" y="721" width="1.2" height="82" fill="url(#sd)" opacity="0.43"/>
<rect x="511.3" y="726" width="1" height="102" fill="url(#so)" opacity="0.43"/>
<rect x="585.8" y="727" width="1.8" height="104" fill="url(#so)" opacity="0.43"/>
<rect x="708.0" y="707" width="1.6" height="80" fill="url(#sr)" opacity="0.44"/>
<rect x="248.8" y="613" width="0.9" height="100" fill="url(#sr)" opacity="0.44"/>
<rect x="332.5" y="627" width="1" height="173" fill="url(#sr)" opacity="0.44"/>
<rect x="535.3" y="706" width="1.8" height="77" fill="url(#sd)" opacity="0.44"/>
<rect x="605.3" y="756" width="1.4" height="79" fill="url(#so)" opacity="0.44"/>
<rect x="279.7" y="716" width="1.8" height="89" fill="url(#sd)" opacity="0.44"/>
<rect x="618.7" y="743" width="1.8" height="98" fill="url(#sd)" opacity="0.44"/>
<rect x="311.9" y="670" width="1" height="124" fill="url(#sd)" opacity="0.44"/>
<rect x="383.4" y="717" width="1" height="121" fill="url(#so)" opacity="0.44"/>
<rect x="503.6" y="711" width="1" height="120" fill="url(#so)" opacity="0.44"/>
<rect x="253.9" y="690" width="1.6" height="90" fill="url(#sd)" opacity="0.44"/>
<rect x="642.6" y="740" width="1.6" height="105" fill="url(#so)" opacity="0.44"/>
<rect x="483.8" y="724" width="1.2" height="70" fill="url(#so)" opacity="0.45"/>
<rect x="134.3" y="708" width="1" height="73" fill="url(#so)" opacity="0.45"/>
<rect x="596.9" y="759" width="1" height="76" fill="url(#sr)" opacity="0.45"/>
<rect x="136.5" y="608" width="1.6" height="131" fill="url(#so)" opacity="0.45"/>
<rect x="685.3" y="778" width="1.6" height="54" fill="url(#sr)" opacity="0.45"/>
<rect x="624.5" y="788" width="0.9" height="42" fill="url(#sr)" opacity="0.45"/>
<rect x="576.0" y="749" width="0.9" height="74" fill="url(#so)" opacity="0.45"/>
<rect x="609.0" y="727" width="1.8" height="69" fill="url(#so)" opacity="0.45"/>
<rect x="321.2" y="653" width="1.6" height="98" fill="url(#sr)" opacity="0.45"/>
<rect x="138.7" y="649" width="1.2" height="143" fill="url(#sr)" opacity="0.46"/>
<rect x="624.0" y="727" width="1.4" height="112" fill="url(#st)" opacity="0.46"/>
<rect x="455.8" y="705" width="1.8" height="96" fill="url(#sd)" opacity="0.46"/>
<rect x="117.6" y="703" width="0.9" height="61" fill="url(#st)" opacity="0.46"/>
<rect x="627.0" y="773" width="1.8" height="58" fill="url(#sr)" opacity="0.46"/>
<rect x="291.3" y="600" width="1" height="176" fill="url(#sr)" opacity="0.46"/>
<rect x="140.1" y="759" width="1" height="84" fill="url(#so)" opacity="0.46"/>
<rect x="681.1" y="761" width="1.6" height="69" fill="url(#so)" opacity="0.46"/>
<rect x="583.3" y="711" width="1" height="68" fill="url(#sd)" opacity="0.46"/>
<rect x="634.5" y="755" width="1.6" height="78" fill="url(#so)" opacity="0.46"/>
<rect x="233.2" y="744" width="1.6" height="95" fill="url(#so)" opacity="0.46"/>
<rect x="546.9" y="722" width="1.5" height="88" fill="url(#st)" opacity="0.46"/>
<rect x="305.8" y="749" width="1.2" height="54" fill="url(#st)" opacity="0.46"/>
<rect x="311.8" y="652" width="1.4" height="149" fill="url(#st)" opacity="0.46"/>
<rect x="133.7" y="612" width="1.4" height="132" fill="url(#sr)" opacity="0.46"/>
<rect x="597.3" y="751" width="1.2" height="78" fill="url(#sr)" opacity="0.46"/>
<rect x="616.4" y="770" width="1.4" height="70" fill="url(#sr)" opacity="0.46"/>
<rect x="227.0" y="637" width="1.2" height="182" fill="url(#sr)" opacity="0.46"/>
<rect x="238.1" y="620" width="1.4" height="104" fill="url(#st)" opacity="0.46"/>
<rect x="255.7" y="649" width="0.9" height="159" fill="url(#sr)" opacity="0.46"/>
<rect x="559.2" y="757" width="1.4" height="59" fill="url(#sd)" opacity="0.47"/>
<rect x="437.4" y="716" width="1.6" height="128" fill="url(#so)" opacity="0.47"/>
<rect x="419.8" y="717" width="1.4" height="79" fill="url(#sd)" opacity="0.47"/>
<rect x="526.3" y="733" width="1" height="69" fill="url(#so)" opacity="0.47"/>
<rect x="146.6" y="638" width="1.8" height="132" fill="url(#sd)" opacity="0.47"/>
<rect x="150.7" y="757" width="1" height="86" fill="url(#so)" opacity="0.47"/>
<rect x="124.4" y="661" width="0.9" height="159" fill="url(#sr)" opacity="0.47"/>
<rect x="578.9" y="723" width="1.6" height="88" fill="url(#st)" opacity="0.47"/>
<rect x="555.8" y="752" width="0.9" height="65" fill="url(#so)" opacity="0.47"/>
<rect x="626.5" y="760" width="1.2" height="77" fill="url(#sr)" opacity="0.47"/>
<rect x="543.5" y="731" width="1.4" height="91" fill="url(#st)" opacity="0.47"/>
<rect x="197.7" y="669" width="1" height="145" fill="url(#sr)" opacity="0.47"/>
<rect x="184.1" y="645" width="1.8" height="136" fill="url(#sd)" opacity="0.47"/>
<rect x="703.3" y="738" width="1" height="100" fill="url(#so)" opacity="0.47"/>
<rect x="208.7" y="601" width="1.8" height="158" fill="url(#sd)" opacity="0.48"/>
<rect x="717.7" y="736" width="1.4" height="90" fill="url(#sr)" opacity="0.48"/>
<rect x="304.0" y="647" width="1.8" height="151" fill="url(#sr)" opacity="0.48"/>
<rect x="130.8" y="597" width="1.4" height="140" fill="url(#sd)" opacity="0.48"/>
<rect x="253.8" y="775" width="1.5" height="64" fill="url(#st)" opacity="0.48"/>
<rect x="163.9" y="613" width="1.6" height="141" fill="url(#sr)" opacity="0.48"/>
<rect x="418.7" y="727" width="1" height="61" fill="url(#sd)" opacity="0.48"/>
<rect x="333.8" y="718" width="1" height="70" fill="url(#so)" opacity="0.48"/>
<rect x="709.1" y="777" width="1.4" height="60" fill="url(#so)" opacity="0.48"/>
<rect x="192.2" y="766" width="1.8" height="45" fill="url(#st)" opacity="0.48"/>
<rect x="207.9" y="611" width="1.8" height="96" fill="url(#sr)" opacity="0.48"/>
<rect x="235.0" y="735" width="1.2" height="90" fill="url(#so)" opacity="0.48"/>
<rect x="235.3" y="691" width="1.4" height="64" fill="url(#so)" opacity="0.49"/>
<rect x="296.3" y="715" width="1" height="73" fill="url(#so)" opacity="0.49"/>
<rect x="400.9" y="721" width="1" height="86" fill="url(#sd)" opacity="0.49"/>
<rect x="600.6" y="769" width="1.4" height="65" fill="url(#sr)" opacity="0.49"/>
<rect x="470.3" y="722" width="1.2" height="91" fill="url(#sr)" opacity="0.49"/>
<rect x="206.7" y="599" width="1.4" height="158" fill="url(#st)" opacity="0.49"/>
<rect x="564.4" y="756" width="1.8" height="71" fill="url(#sr)" opacity="0.49"/>
<rect x="195.9" y="710" width="1" height="63" fill="url(#st)" opacity="0.49"/>
<rect x="554.0" y="739" width="0.9" height="84" fill="url(#sr)" opacity="0.49"/>
<rect x="407.2" y="718" width="1.8" height="54" fill="url(#st)" opacity="0.49"/>
<rect x="292.0" y="608" width="1" height="127" fill="url(#st)" opacity="0.49"/>
<rect x="364.9" y="712" width="1" height="96" fill="url(#so)" opacity="0.49"/>
<rect x="513.3" y="703" width="1" height="92" fill="url(#so)" opacity="0.49"/>
<rect x="545.5" y="722" width="1" height="108" fill="url(#st)" opacity="0.49"/>
<rect x="687.5" y="733" width="1.6" height="109" fill="url(#so)" opacity="0.49"/>
<rect x="697.5" y="702" width="1.2" height="61" fill="url(#st)" opacity="0.49"/>
<rect x="624.4" y="704" width="1.6" height="99" fill="url(#sr)" opacity="0.50"/>
<rect x="414.3" y="746" width="1" height="42" fill="url(#st)" opacity="0.50"/>
<rect x="160.9" y="755" width="1.4" height="82" fill="url(#st)" opacity="0.50"/>
<rect x="245.5" y="658" width="1.8" height="97" fill="url(#sr)" opacity="0.50"/>
<rect x="355.9" y="725" width="1.4" height="112" fill="url(#so)" opacity="0.50"/>
<rect x="691.7" y="776" width="1.2" height="51" fill="url(#sr)" opacity="0.50"/>
<rect x="631.6" y="768" width="1.8" height="64" fill="url(#sr)" opacity="0.50"/>
<rect x="117.3" y="758" width="0.9" height="77" fill="url(#st)" opacity="0.50"/>
<rect x="653.2" y="776" width="1.6" height="56" fill="url(#so)" opacity="0.51"/>
<rect x="552.2" y="738" width="1.8" height="87" fill="url(#so)" opacity="0.51"/>
<rect x="424.9" y="721" width="1" height="72" fill="url(#sr)" opacity="0.51"/>
<rect x="182.5" y="735" width="1.2" height="101" fill="url(#st)" opacity="0.51"/>
<rect x="358.9" y="735" width="1.6" height="98" fill="url(#sd)" opacity="0.51"/>
<rect x="537.9" y="696" width="1.4" height="67" fill="url(#so)" opacity="0.51"/>
<rect x="260.3" y="741" width="1.2" height="94" fill="url(#sd)" opacity="0.51"/>
<rect x="606.5" y="778" width="1.2" height="58" fill="url(#sr)" opacity="0.51"/>
<rect x="528.6" y="771" width="1.5" height="59" fill="url(#st)" opacity="0.51"/>
<rect x="554.7" y="715" width="0.9" height="113" fill="url(#sr)" opacity="0.51"/>
<rect x="666.0" y="736" width="0.9" height="103" fill="url(#sr)" opacity="0.51"/>
<rect x="215.5" y="663" width="0.9" height="168" fill="url(#st)" opacity="0.51"/>
<rect x="228.2" y="631" width="1.4" height="175" fill="url(#sd)" opacity="0.51"/>
<rect x="175.5" y="606" width="1" height="162" fill="url(#sr)" opacity="0.51"/>
<rect x="282.9" y="701" width="1.8" height="86" fill="url(#sd)" opacity="0.51"/>
<rect x="560.8" y="751" width="1.2" height="67" fill="url(#sr)" opacity="0.51"/>
<rect x="544.4" y="712" width="1.4" height="102" fill="url(#so)" opacity="0.51"/>
<rect x="316.3" y="757" width="1.8" height="61" fill="url(#st)" opacity="0.51"/>
<rect x="181.1" y="733" width="1.6" height="82" fill="url(#sd)" opacity="0.52"/>
<rect x="645.1" y="771" width="1.6" height="64" fill="url(#so)" opacity="0.52"/>
<rect x="226.3" y="718" width="0.9" height="74" fill="url(#st)" opacity="0.52"/>
<rect x="537.2" y="703" width="1.4" height="68" fill="url(#so)" opacity="0.52"/>
<rect x="270.8" y="614" width="1" height="144" fill="url(#sr)" opacity="0.52"/>
<rect x="122.3" y="617" width="0.9" height="95" fill="url(#st)" opacity="0.52"/>
<rect x="424.3" y="734" width="1.2" height="123" fill="url(#so)" opacity="0.52"/>
<rect x="328.0" y="710" width="1.8" height="87" fill="url(#st)" opacity="0.52"/>
<rect x="246.6" y="757" width="1.6" height="80" fill="url(#st)" opacity="0.52"/>
<rect x="633.4" y="767" width="1.4" height="71" fill="url(#so)" opacity="0.52"/>
<rect x="210.3" y="665" width="1.6" height="95" fill="url(#st)" opacity="0.52"/>
<rect x="172.5" y="742" width="0.9" height="86" fill="url(#st)" opacity="0.52"/>
<rect x="326.0" y="705" width="1.8" height="108" fill="url(#st)" opacity="0.52"/>
<rect x="503.1" y="722" width="1" height="119" fill="url(#st)" opacity="0.52"/>
<rect x="295.4" y="650" width="1.2" height="153" fill="url(#sr)" opacity="0.53"/>
<rect x="648.5" y="747" width="1.6" height="99" fill="url(#so)" opacity="0.53"/>
<rect x="330.8" y="612" width="1" height="115" fill="url(#sr)" opacity="0.53"/>
<rect x="152.5" y="626" width="1.4" height="152" fill="url(#sr)" opacity="0.53"/>
<rect x="533.7" y="716" width="1.4" height="108" fill="url(#so)" opacity="0.53"/>
<rect x="235.9" y="622" width="1.4" height="99" fill="url(#st)" opacity="0.53"/>
<rect x="544.2" y="727" width="1.5" height="32" fill="url(#st)" opacity="0.53"/>
<rect x="312.2" y="724" width="1.5" height="80" fill="url(#st)" opacity="0.53"/>
<rect x="494.1" y="737" width="1.5" height="46" fill="url(#st)" opacity="0.53"/>
<rect x="550.8" y="755" width="0.9" height="66" fill="url(#sr)" opacity="0.53"/>
<rect x="228.8" y="727" width="1.2" height="71" fill="url(#so)" opacity="0.53"/>
<rect x="124.6" y="597" width="1.4" height="186" fill="url(#sr)" opacity="0.53"/>
<rect x="145.6" y="632" width="1.4" height="99" fill="url(#sr)" opacity="0.54"/>
<rect x="277.3" y="740" width="1.8" height="82" fill="url(#st)" opacity="0.54"/>
<rect x="468.6" y="691" width="1.2" height="64" fill="url(#so)" opacity="0.54"/>
<rect x="129.4" y="600" width="1.4" height="185" fill="url(#sr)" opacity="0.54"/>
<rect x="145.1" y="608" width="0.9" height="159" fill="url(#sd)" opacity="0.54"/>
<rect x="499.8" y="707" width="1.4" height="62" fill="url(#sd)" opacity="0.54"/>
<rect x="457.2" y="708" width="1.6" height="93" fill="url(#so)" opacity="0.54"/>
<rect x="178.7" y="632" width="1.6" height="156" fill="url(#sr)" opacity="0.54"/>
<rect x="382.0" y="719" width="1" height="116" fill="url(#sd)" opacity="0.54"/>
<rect x="304.9" y="609" width="1" height="127" fill="url(#st)" opacity="0.54"/>
<rect x="269.2" y="632" width="1.2" height="151" fill="url(#so)" opacity="0.54"/>
<rect x="287.9" y="667" width="0.9" height="134" fill="url(#sr)" opacity="0.54"/>
<rect x="349.6" y="700" width="1.8" height="108" fill="url(#so)" opacity="0.54"/>
<rect x="192.5" y="659" width="1.4" height="133" fill="url(#sr)" opacity="0.54"/>
<rect x="210.4" y="626" width="1.2" height="95" fill="url(#sr)" opacity="0.54"/>
<rect x="282.3" y="741" width="1.8" height="84" fill="url(#so)" opacity="0.54"/>
<rect x="148.2" y="725" width="0.9" height="86" fill="url(#sd)" opacity="0.54"/>
<rect x="496.5" y="730" width="1.4" height="109" fill="url(#st)" opacity="0.54"/>
<rect x="367.1" y="755" width="1.5" height="32" fill="url(#st)" opacity="0.54"/>
<rect x="662.2" y="777" width="1.4" height="61" fill="url(#sd)" opacity="0.55"/>
<rect x="129.6" y="618" width="1.6" height="92" fill="url(#sd)" opacity="0.55"/>
<rect x="125.9" y="602" width="1.2" height="90" fill="url(#sr)" opacity="0.55"/>
<rect x="400.8" y="735" width="0.9" height="66" fill="url(#st)" opacity="0.55"/>
<rect x="254.8" y="732" width="0.9" height="94" fill="url(#so)" opacity="0.55"/>
<rect x="219.7" y="724" width="1.2" height="82" fill="url(#st)" opacity="0.55"/>
<rect x="521.4" y="672" width="1.2" height="89" fill="url(#st)" opacity="0.55"/>
<rect x="137.6" y="738" width="1.8" height="91" fill="url(#st)" opacity="0.55"/>
<rect x="514.2" y="703" width="1.2" height="90" fill="url(#so)" opacity="0.55"/>
<rect x="275.3" y="715" width="1.4" height="113" fill="url(#st)" opacity="0.55"/>
<rect x="444.9" y="690" width="1.2" height="124" fill="url(#so)" opacity="0.55"/>
<rect x="183.6" y="699" width="1.2" height="79" fill="url(#st)" opacity="0.55"/>
<rect x="548.5" y="724" width="1.8" height="78" fill="url(#sd)" opacity="0.55"/>
<rect x="625.0" y="760" width="1.2" height="76" fill="url(#sr)" opacity="0.55"/>
<rect x="266.8" y="665" width="1.4" height="145" fill="url(#sd)" opacity="0.56"/>
<rect x="404.7" y="719" width="1.8" height="97" fill="url(#so)" opacity="0.56"/>
<rect x="190.1" y="625" width="0.9" height="157" fill="url(#st)" opacity="0.56"/>
<rect x="647.2" y="750" width="1.2" height="84" fill="url(#sr)" opacity="0.56"/>
<rect x="392.2" y="709" width="1.2" height="98" fill="url(#sr)" opacity="0.56"/>
<rect x="648.4" y="775" width="1.8" height="64" fill="url(#sr)" opacity="0.56"/>
<rect x="244.3" y="731" width="1.6" height="101" fill="url(#sd)" opacity="0.56"/>
<rect x="225.4" y="703" width="1" height="119" fill="url(#st)" opacity="0.57"/>
<rect x="497.5" y="725" width="1.2" height="92" fill="url(#st)" opacity="0.57"/>
<rect x="318.1" y="710" width="1.4" height="108" fill="url(#st)" opacity="0.57"/>
<rect x="244.6" y="743" width="1" height="94" fill="url(#sd)" opacity="0.57"/>
<rect x="131.3" y="723" width="1.8" height="85" fill="url(#so)" opacity="0.57"/>
<rect x="408.9" y="697" width="1" height="128" fill="url(#sd)" opacity="0.57"/>
<rect x="244.7" y="624" width="1.6" height="115" fill="url(#sr)" opacity="0.57"/>
<rect x="546.5" y="787" width="1" height="33" fill="url(#sr)" opacity="0.57"/>
<rect x="314.8" y="646" width="1.8" height="138" fill="url(#sr)" opacity="0.57"/>
<rect x="548.3" y="690" width="1.8" height="86" fill="url(#sd)" opacity="0.57"/>
<rect x="229.9" y="641" width="0.9" height="187" fill="url(#sr)" opacity="0.57"/>
<rect x="716.8" y="748" width="1" height="78" fill="url(#sr)" opacity="0.57"/>
<rect x="514.9" y="712" width="1.4" height="68" fill="url(#sd)" opacity="0.57"/>
<rect x="238.4" y="739" width="1.8" height="80" fill="url(#st)" opacity="0.57"/>
<rect x="486.4" y="750" width="1.8" height="50" fill="url(#st)" opacity="0.58"/>
<rect x="600.8" y="786" width="1" height="44" fill="url(#sr)" opacity="0.58"/>
<rect x="218.6" y="742" width="1.8" height="84" fill="url(#sd)" opacity="0.58"/>
<rect x="650.7" y="756" width="1.6" height="78" fill="url(#sr)" opacity="0.58"/>
<rect x="438.7" y="719" width="1.2" height="71" fill="url(#so)" opacity="0.58"/>
<rect x="286.6" y="709" width="1" height="72" fill="url(#sd)" opacity="0.58"/>
<rect x="191.1" y="779" width="1" height="61" fill="url(#st)" opacity="0.58"/>
<rect x="216.7" y="701" width="1.6" height="79" fill="url(#so)" opacity="0.58"/>
<rect x="174.1" y="665" width="1.8" height="113" fill="url(#st)" opacity="0.59"/>
<rect x="679.3" y="768" width="1.6" height="66" fill="url(#sr)" opacity="0.59"/>
<rect x="511.8" y="693" width="1.2" height="63" fill="url(#sd)" opacity="0.59"/>
<rect x="509.3" y="743" width="1.2" height="82" fill="url(#st)" opacity="0.59"/>
<rect x="259.4" y="707" width="1.6" height="66" fill="url(#sd)" opacity="0.59"/>
<rect x="607.4" y="754" width="0.9" height="85" fill="url(#sr)" opacity="0.59"/>
<rect x="632.6" y="785" width="0.9" height="49" fill="url(#sr)" opacity="0.59"/>
<rect x="382.3" y="713" width="1.4" height="79" fill="url(#sd)" opacity="0.59"/>
<rect x="629.1" y="761" width="1" height="68" fill="url(#sr)" opacity="0.59"/>
<rect x="197.0" y="786" width="1.2" height="54" fill="url(#st)" opacity="0.59"/>
<rect x="673.1" y="764" width="1.2" height="66" fill="url(#so)" opacity="0.60"/>
<rect x="301.5" y="627" width="1.6" height="174" fill="url(#sr)" opacity="0.60"/>
<rect x="312.2" y="621" width="1.8" height="120" fill="url(#sr)" opacity="0.60"/>
<rect x="550.0" y="769" width="1.4" height="52" fill="url(#so)" opacity="0.60"/>
<rect x="507.1" y="701" width="0.9" height="112" fill="url(#so)" opacity="0.60"/>
<rect x="276.0" y="615" width="1.2" height="142" fill="url(#st)" opacity="0.60"/>
<rect x="221.9" y="595" width="1.8" height="138" fill="url(#sd)" opacity="0.60"/>
<rect x="330.1" y="738" width="1.2" height="81" fill="url(#st)" opacity="0.60"/>
<rect x="288.9" y="698" width="0.9" height="89" fill="url(#st)" opacity="0.60"/>
<rect x="111.5" y="638" width="0.9" height="106" fill="url(#so)" opacity="0.60"/>
<rect x="191.4" y="616" width="0.9" height="117" fill="url(#sr)" opacity="0.61"/>
<rect x="535.3" y="753" width="1.8" height="68" fill="url(#st)" opacity="0.61"/>
<rect x="125.8" y="603" width="0.9" height="161" fill="url(#so)" opacity="0.61"/>
<rect x="145.8" y="695" width="1" height="91" fill="url(#st)" opacity="0.61"/>
<rect x="314.6" y="628" width="1.4" height="144" fill="url(#sr)" opacity="0.61"/>
<rect x="262.5" y="724" width="1.6" height="67" fill="url(#so)" opacity="0.61"/>
<rect x="400.2" y="739" width="1.8" height="94" fill="url(#st)" opacity="0.61"/>
<rect x="111.2" y="739" width="1.6" height="63" fill="url(#sd)" opacity="0.61"/>
<rect x="500.7" y="723" width="1" height="59" fill="url(#st)" opacity="0.62"/>
<rect x="115.2" y="660" width="1.4" height="92" fill="url(#so)" opacity="0.62"/>
<rect x="230.3" y="784" width="1" height="39" fill="url(#st)" opacity="0.62"/>
<rect x="276.8" y="694" width="0.9" height="112" fill="url(#sd)" opacity="0.62"/>
<rect x="179.1" y="609" width="1.6" height="181" fill="url(#sr)" opacity="0.62"/>
<rect x="129.2" y="760" width="1.2" height="85" fill="url(#st)" opacity="0.62"/>
<rect x="133.9" y="655" width="1.8" height="170" fill="url(#sr)" opacity="0.62"/>
<rect x="262.4" y="656" width="1.4" height="168" fill="url(#sr)" opacity="0.62"/>
<rect x="484.2" y="766" width="1.5" height="57" fill="url(#st)" opacity="0.63"/>
<rect x="168.0" y="706" width="1.2" height="110" fill="url(#st)" opacity="0.63"/>
<rect x="516.6" y="772" width="1" height="61" fill="url(#st)" opacity="0.63"/>
<rect x="134.6" y="637" width="0.9" height="183" fill="url(#sd)" opacity="0.63"/>
<rect x="322.2" y="625" width="1" height="146" fill="url(#sr)" opacity="0.63"/>
<rect x="290.7" y="626" width="1.6" height="159" fill="url(#sr)" opacity="0.64"/>
<rect x="512.0" y="775" width="1.8" height="45" fill="url(#st)" opacity="0.64"/>
<rect x="250.6" y="782" width="1.5" height="52" fill="url(#st)" opacity="0.64"/>
<rect x="310.5" y="619" width="1.2" height="145" fill="url(#st)" opacity="0.64"/>
<rect x="182.8" y="644" width="1.8" height="107" fill="url(#sr)" opacity="0.64"/>
<rect x="317.3" y="676" width="1.8" height="92" fill="url(#sd)" opacity="0.64"/>
<rect x="182.3" y="664" width="1.4" height="105" fill="url(#st)" opacity="0.64"/>
<rect x="293.7" y="632" width="1.2" height="131" fill="url(#sr)" opacity="0.65"/>
<rect x="118.4" y="643" width="1" height="142" fill="url(#so)" opacity="0.65"/>
<rect x="345.5" y="673" width="1.8" height="87" fill="url(#st)" opacity="0.65"/>
<rect x="119.2" y="757" width="1.8" height="78" fill="url(#st)" opacity="0.65"/>
<rect x="128.3" y="634" width="0.9" height="169" fill="url(#st)" opacity="0.65"/>
<rect x="208.1" y="705" width="1.6" height="61" fill="url(#so)" opacity="0.66"/>
<rect x="244.9" y="612" width="1.6" height="113" fill="url(#sr)" opacity="0.66"/>
<rect x="237.5" y="666" width="1.4" height="123" fill="url(#sr)" opacity="0.66"/>
<rect x="271.9" y="677" width="1.6" height="136" fill="url(#st)" opacity="0.66"/>
<rect x="121.3" y="692" width="0.9" height="116" fill="url(#so)" opacity="0.66"/>
<rect x="247.5" y="640" width="1.2" height="115" fill="url(#st)" opacity="0.66"/>
<rect x="284.5" y="759" width="1.6" height="64" fill="url(#so)" opacity="0.67"/>
<rect x="240.6" y="695" width="0.9" height="118" fill="url(#sd)" opacity="0.67"/>
<rect x="220.1" y="643" width="1.4" height="118" fill="url(#sr)" opacity="0.67"/>
<rect x="107.4" y="625" width="1.6" height="173" fill="url(#sr)" opacity="0.67"/>
<rect x="322.7" y="736" width="1.8" height="61" fill="url(#st)" opacity="0.67"/>
<rect x="275.7" y="652" width="1.2" height="134" fill="url(#sr)" opacity="0.67"/>
<rect x="138.2" y="618" width="0.9" height="109" fill="url(#so)" opacity="0.68"/>
<rect x="230.9" y="745" width="1.2" height="94" fill="url(#so)" opacity="0.68"/>
<rect x="329.4" y="755" width="0.9" height="64" fill="url(#sd)" opacity="0.68"/>
<rect x="208.3" y="660" width="1.4" height="154" fill="url(#sr)" opacity="0.68"/>
<rect x="219.7" y="594" width="1.4" height="130" fill="url(#st)" opacity="0.68"/>
<rect x="120.4" y="711" width="1.8" height="103" fill="url(#st)" opacity="0.68"/>
<rect x="319.4" y="610" width="1.6" height="181" fill="url(#st)" opacity="0.68"/>
<rect x="176.4" y="696" width="0.9" height="91" fill="url(#st)" opacity="0.69"/>
<rect x="276.8" y="621" width="1" height="108" fill="url(#sr)" opacity="0.69"/>
<rect x="153.2" y="613" width="1.8" height="98" fill="url(#sd)" opacity="0.69"/>
<rect x="211.7" y="771" width="1.8" height="55" fill="url(#st)" opacity="0.69"/>
<rect x="122.4" y="639" width="0.9" height="183" fill="url(#sr)" opacity="0.69"/>
<rect x="293.5" y="736" width="1.8" height="64" fill="url(#sd)" opacity="0.69"/>
<rect x="271.6" y="700" width="1.8" height="112" fill="url(#so)" opacity="0.69"/>
<rect x="115.5" y="595" width="0.9" height="143" fill="url(#st)" opacity="0.69"/>
<rect x="127.2" y="627" width="1.8" height="92" fill="url(#sr)" opacity="0.70"/>
<rect x="282.6" y="698" width="0.9" height="73" fill="url(#so)" opacity="0.70"/>
<rect x="156.4" y="632" width="1.2" height="135" fill="url(#sr)" opacity="0.70"/>
<rect x="254.7" y="656" width="1.4" height="94" fill="url(#sr)" opacity="0.70"/>
<rect x="150.2" y="620" width="1.8" height="104" fill="url(#sr)" opacity="0.70"/>
<rect x="323.9" y="653" width="1.4" height="129" fill="url(#sr)" opacity="0.70"/>
<rect x="217.5" y="762" width="1.8" height="60" fill="url(#st)" opacity="0.71"/>
<rect x="172.2" y="665" width="1.2" height="154" fill="url(#st)" opacity="0.71"/>
<rect x="208.0" y="627" width="1" height="170" fill="url(#so)" opacity="0.71"/>
<rect x="175.7" y="646" width="1.4" height="172" fill="url(#sr)" opacity="0.71"/>
<rect x="295.0" y="674" width="0.9" height="124" fill="url(#sr)" opacity="0.71"/>
<rect x="251.1" y="619" width="1.2" height="104" fill="url(#sd)" opacity="0.71"/>
<rect x="359.2" y="771" width="1.5" height="56" fill="url(#st)" opacity="0.72"/>
<rect x="308.2" y="615" width="0.9" height="157" fill="url(#sd)" opacity="0.72"/>
<rect x="192.6" y="606" width="0.9" height="147" fill="url(#st)" opacity="0.72"/>
<rect x="479.4" y="752" width="1.5" height="50" fill="url(#st)" opacity="0.72"/>
<rect x="370.0" y="706" width="1.8" height="55" fill="url(#st)" opacity="0.73"/>
<rect x="173.9" y="618" width="0.9" height="121" fill="url(#sr)" opacity="0.73"/>
<rect x="159.2" y="668" width="1" height="164" fill="url(#st)" opacity="0.73"/>
<rect x="268.5" y="683" width="0.9" height="147" fill="url(#sd)" opacity="0.73"/>
<rect x="147.8" y="786" width="1.2" height="41" fill="url(#st)" opacity="0.74"/>
<rect x="326.7" y="590" width="1" height="136" fill="url(#sr)" opacity="0.74"/>
<rect x="331.3" y="638" width="1" height="158" fill="url(#sr)" opacity="0.74"/>
<rect x="248.7" y="599" width="1.8" height="172" fill="url(#sr)" opacity="0.75"/>
<rect x="172.0" y="642" width="1" height="180" fill="url(#sr)" opacity="0.75"/>
<rect x="432.5" y="730" width="1.8" height="74" fill="url(#st)" opacity="0.75"/>
<rect x="224.3" y="787" width="1" height="40" fill="url(#st)" opacity="0.76"/>
<rect x="272.4" y="664" width="1.4" height="124" fill="url(#st)" opacity="0.76"/>
<rect x="123.2" y="608" width="1.2" height="185" fill="url(#sr)" opacity="0.76"/>
<rect x="210.5" y="598" width="1.8" height="98" fill="url(#sr)" opacity="0.76"/>
<rect x="418.7" y="714" width="1" height="90" fill="url(#st)" opacity="0.77"/>
<rect x="262.0" y="630" width="0.9" height="102" fill="url(#sr)" opacity="0.77"/>
<rect x="175.2" y="670" width="1.8" height="151" fill="url(#sr)" opacity="0.77"/>
<rect x="150.3" y="636" width="1.2" height="129" fill="url(#sr)" opacity="0.77"/>
<rect x="222.6" y="650" width="1.2" height="155" fill="url(#sr)" opacity="0.77"/>
<rect x="321.0" y="649" width="1" height="116" fill="url(#sr)" opacity="0.77"/>
<rect x="162.9" y="621" width="1" height="123" fill="url(#sr)" opacity="0.77"/>
<rect x="187.4" y="783" width="1" height="47" fill="url(#st)" opacity="0.78"/>
<rect x="176.3" y="620" width="1" height="94" fill="url(#so)" opacity="0.78"/>
<rect x="278.9" y="685" width="1.6" height="138" fill="url(#sd)" opacity="0.78"/>
<rect x="160.3" y="609" width="1.6" height="151" fill="url(#sr)" opacity="0.78"/>
<rect x="334.0" y="653" width="1.4" height="119" fill="url(#sr)" opacity="0.78"/>
<rect x="480.6" y="717" width="1" height="52" fill="url(#st)" opacity="0.78"/>
<rect x="301.3" y="648" width="1.2" height="147" fill="url(#sr)" opacity="0.79"/>
<rect x="174.7" y="642" width="0.9" height="167" fill="url(#sr)" opacity="0.79"/>
<rect x="118.4" y="637" width="1" height="184" fill="url(#sr)" opacity="0.79"/>
<rect x="294.1" y="637" width="1.4" height="182" fill="url(#sd)" opacity="0.79"/>
<rect x="253.8" y="610" width="0.9" height="159" fill="url(#sd)" opacity="0.79"/>
<rect x="304.3" y="667" width="1" height="109" fill="url(#sr)" opacity="0.79"/>
<rect x="306.4" y="670" width="1" height="125" fill="url(#sr)" opacity="0.80"/>
<rect x="110.3" y="665" width="1.6" height="139" fill="url(#st)" opacity="0.80"/>
<rect x="268.1" y="621" width="1" height="91" fill="url(#sd)" opacity="0.80"/>
<rect x="298.5" y="644" width="1" height="152" fill="url(#sr)" opacity="0.80"/>
<rect x="267.8" y="626" width="1.6" height="120" fill="url(#sr)" opacity="0.80"/>
<rect x="149.8" y="619" width="1.4" height="164" fill="url(#sr)" opacity="0.80"/>
<rect x="184.7" y="635" width="0.9" height="185" fill="url(#sr)" opacity="0.80"/>
<rect x="211.2" y="638" width="1.6" height="104" fill="url(#sr)" opacity="0.80"/>
<rect x="138.9" y="606" width="1" height="161" fill="url(#sd)" opacity="0.81"/>
<rect x="283.6" y="650" width="1.8" height="122" fill="url(#sr)" opacity="0.81"/>
<rect x="215.3" y="619" width="1.2" height="111" fill="url(#st)" opacity="0.81"/>
<rect x="314.9" y="716" width="1.8" height="94" fill="url(#st)" opacity="0.82"/>
<rect x="356.5" y="717" width="1" height="80" fill="url(#st)" opacity="0.82"/>
<rect x="220.1" y="601" width="1.6" height="134" fill="url(#sr)" opacity="0.82"/>
<rect x="176.4" y="636" width="1.2" height="172" fill="url(#sr)" opacity="0.82"/>
<rect x="488.6" y="787" width="1.8" height="55" fill="url(#st)" opacity="0.82"/>
<rect x="287.8" y="623" width="1" height="158" fill="url(#st)" opacity="0.83"/>
<rect x="165.6" y="600" width="1.2" height="186" fill="url(#sd)" opacity="0.83"/>
<rect x="304.7" y="635" width="0.9" height="132" fill="url(#sr)" opacity="0.83"/>
<rect x="265.7" y="605" width="1.6" height="152" fill="url(#st)" opacity="0.83"/>
<rect x="220.5" y="619" width="1.2" height="148" fill="url(#sr)" opacity="0.84"/>
<rect x="317.4" y="676" width="1.4" height="115" fill="url(#sr)" opacity="0.84"/>
<rect x="316.9" y="614" width="1.8" height="98" fill="url(#sr)" opacity="0.84"/>
<rect x="302.3" y="622" width="1.6" height="137" fill="url(#sr)" opacity="0.84"/>
<rect x="282.0" y="648" width="1.4" height="118" fill="url(#sr)" opacity="0.84"/>
<rect x="195.7" y="623" width="1.2" height="185" fill="url(#sr)" opacity="0.84"/>
<rect x="112.2" y="638" width="1" height="147" fill="url(#st)" opacity="0.84"/>
<rect x="153.1" y="795" width="1" height="50" fill="url(#st)" opacity="0.85"/>
<rect x="270.7" y="660" width="0.9" height="146" fill="url(#sr)" opacity="0.85"/>
<rect x="334.4" y="614" width="1.6" height="170" fill="url(#sr)" opacity="0.85"/>
<rect x="173.4" y="653" width="0.9" height="136" fill="url(#sr)" opacity="0.85"/>
<rect x="270.4" y="632" width="1.6" height="125" fill="url(#sr)" opacity="0.86"/>
<rect x="177.3" y="746" width="1.5" height="82" fill="url(#st)" opacity="0.86"/>
<rect x="329.7" y="620" width="1" height="151" fill="url(#sr)" opacity="0.86"/>
<rect x="473.7" y="732" width="1" height="70" fill="url(#st)" opacity="0.86"/>
<rect x="276.3" y="651" width="1" height="120" fill="url(#sd)" opacity="0.86"/>
<rect x="284.0" y="735" width="1.5" height="94" fill="url(#st)" opacity="0.86"/>
<rect x="109.9" y="630" width="1.2" height="140" fill="url(#sr)" opacity="0.86"/>
<rect x="222.4" y="603" width="0.9" height="174" fill="url(#sd)" opacity="0.86"/>
<rect x="256.9" y="655" width="0.9" height="92" fill="url(#sd)" opacity="0.87"/>
<rect x="180.4" y="727" width="1.5" height="92" fill="url(#st)" opacity="0.88"/>
<rect x="249.1" y="776" width="1.5" height="55" fill="url(#st)" opacity="0.88"/>
<rect x="425.0" y="727" width="1.2" height="60" fill="url(#st)" opacity="0.89"/>
<rect x="117.3" y="603" width="1.6" height="180" fill="url(#sr)" opacity="0.89"/>
<rect x="327.2" y="597" width="1" height="121" fill="url(#st)" opacity="0.89"/>
<rect x="187.2" y="606" width="1.8" height="93" fill="url(#sr)" opacity="0.89"/>
<rect x="291.5" y="662" width="1" height="108" fill="url(#sr)" opacity="0.89"/>
<rect x="206.8" y="669" width="0.9" height="128" fill="url(#sr)" opacity="0.90"/>
<rect x="153.4" y="655" width="1.8" height="142" fill="url(#sr)" opacity="0.90"/>
<rect x="187.0" y="655" width="1.4" height="105" fill="url(#sr)" opacity="0.90"/>
<rect x="289.6" y="612" width="1.8" height="121" fill="url(#sd)" opacity="0.90"/>
<rect x="500.7" y="692" width="1.2" height="80" fill="url(#st)" opacity="0.90"/>
<rect x="557.7" y="696" width="1" height="94" fill="url(#sb)" opacity="0.26"/>
<rect x="504.5" y="713" width="1.2" height="80" fill="url(#sb)" opacity="0.32"/>
<rect x="523.0" y="712" width="1.8" height="91" fill="url(#sb)" opacity="0.34"/>
<rect x="260.2" y="750" width="1.6" height="85" fill="url(#sb)" opacity="0.41"/>
<rect x="330.5" y="608" width="0.9" height="125" fill="url(#sb)" opacity="0.42"/>
<rect x="165.2" y="625" width="1.8" height="183" fill="url(#sb)" opacity="0.42"/>
<rect x="223.4" y="632" width="1.8" height="112" fill="url(#sb)" opacity="0.43"/>
<rect x="192.2" y="608" width="1.2" height="180" fill="url(#sb)" opacity="0.43"/>
<rect x="217.7" y="617" width="0.9" height="190" fill="url(#sb)" opacity="0.43"/>
<rect x="232.5" y="644" width="1.4" height="113" fill="url(#sl)" opacity="0.44"/>
<rect x="539.7" y="727" width="1.4" height="60" fill="url(#sb)" opacity="0.45"/>
<rect x="312.4" y="655" width="1" height="162" fill="url(#sb)" opacity="0.45"/>
<rect x="311.0" y="765" width="1.5" height="44" fill="url(#sb)" opacity="0.45"/>
<rect x="169.7" y="766" width="1.5" height="74" fill="url(#sb)" opacity="0.45"/>
<rect x="215.3" y="633" width="1.8" height="127" fill="url(#sb)" opacity="0.45"/>
<rect x="276.2" y="751" width="1.8" height="72" fill="url(#sl)" opacity="0.46"/>
<rect x="464.5" y="713" width="1.2" height="90" fill="url(#sl)" opacity="0.46"/>
<rect x="355.8" y="711" width="1.5" height="36" fill="url(#sl)" opacity="0.46"/>
<rect x="553.6" y="711" width="1.8" height="117" fill="url(#sb)" opacity="0.46"/>
<rect x="519.7" y="697" width="1.6" height="63" fill="url(#sb)" opacity="0.46"/>
<rect x="158.9" y="798" width="1.5" height="41" fill="url(#sl)" opacity="0.47"/>
<rect x="416.8" y="767" width="1.5" height="81" fill="url(#sb)" opacity="0.47"/>
<rect x="496.4" y="753" width="1.8" height="71" fill="url(#sl)" opacity="0.47"/>
<rect x="248.1" y="617" width="0.9" height="145" fill="url(#sb)" opacity="0.48"/>
<rect x="478.8" y="689" width="1" height="77" fill="url(#sl)" opacity="0.48"/>
<rect x="147.9" y="791" width="1.8" height="41" fill="url(#sl)" opacity="0.48"/>
<rect x="394.4" y="748" width="1.2" height="46" fill="url(#sb)" opacity="0.48"/>
<rect x="125.5" y="752" width="1.5" height="89" fill="url(#sb)" opacity="0.48"/>
<rect x="381.9" y="741" width="1" height="42" fill="url(#sb)" opacity="0.49"/>
<rect x="167.3" y="659" width="0.9" height="167" fill="url(#sb)" opacity="0.49"/>
<rect x="185.1" y="597" width="0.9" height="116" fill="url(#sb)" opacity="0.49"/>
<rect x="167.0" y="773" width="1" height="62" fill="url(#sb)" opacity="0.49"/>
<rect x="190.2" y="758" width="1.8" height="85" fill="url(#sb)" opacity="0.49"/>
<rect x="157.9" y="763" width="1.8" height="83" fill="url(#sb)" opacity="0.49"/>
<rect x="512.4" y="739" width="1.5" height="52" fill="url(#sl)" opacity="0.49"/>
<rect x="531.2" y="723" width="1.2" height="59" fill="url(#sb)" opacity="0.49"/>
<rect x="371.8" y="714" width="1.2" height="80" fill="url(#sb)" opacity="0.50"/>
<rect x="217.4" y="626" width="1.6" height="138" fill="url(#sb)" opacity="0.50"/>
<rect x="396.0" y="786" width="1.5" height="46" fill="url(#sb)" opacity="0.50"/>
<rect x="497.2" y="792" width="1" height="39" fill="url(#sb)" opacity="0.50"/>
<rect x="285.5" y="622" width="1.8" height="150" fill="url(#sb)" opacity="0.50"/>
<rect x="457.4" y="783" width="1" height="48" fill="url(#sb)" opacity="0.50"/>
<rect x="534.6" y="721" width="1.8" height="68" fill="url(#sb)" opacity="0.50"/>
<rect x="208.5" y="616" width="1.2" height="188" fill="url(#sb)" opacity="0.50"/>
<rect x="258.0" y="764" width="1.5" height="69" fill="url(#sb)" opacity="0.50"/>
<rect x="151.9" y="771" width="1.5" height="55" fill="url(#sb)" opacity="0.51"/>
<rect x="369.7" y="738" width="1.5" height="54" fill="url(#sb)" opacity="0.51"/>
<rect x="333.2" y="641" width="1.6" height="119" fill="url(#sb)" opacity="0.52"/>
<rect x="114.6" y="598" width="1.6" height="138" fill="url(#sb)" opacity="0.52"/>
<rect x="118.7" y="602" width="1.4" height="119" fill="url(#sb)" opacity="0.52"/>
<rect x="299.5" y="722" width="1.4" height="65" fill="url(#sb)" opacity="0.52"/>
<rect x="289.8" y="626" width="1.2" height="143" fill="url(#sb)" opacity="0.52"/>
<rect x="270.9" y="642" width="1" height="102" fill="url(#sb)" opacity="0.53"/>
<rect x="204.9" y="657" width="1.8" height="141" fill="url(#sb)" opacity="0.53"/>
<rect x="163.8" y="716" width="1.2" height="103" fill="url(#sb)" opacity="0.53"/>
<rect x="296.3" y="765" width="1.5" height="48" fill="url(#sl)" opacity="0.54"/>
<rect x="294.1" y="606" width="1.2" height="161" fill="url(#sb)" opacity="0.54"/>
<rect x="317.5" y="753" width="0.9" height="65" fill="url(#sb)" opacity="0.54"/>
<rect x="410.9" y="712" width="1.8" height="76" fill="url(#sb)" opacity="0.54"/>
<rect x="179.8" y="616" width="0.9" height="110" fill="url(#sb)" opacity="0.55"/>
<rect x="632.5" y="715" width="1.3" height="136" fill="url(#sb)" opacity="0.55"/>
<rect x="671.5" y="715" width="1.3" height="123" fill="url(#sb)" opacity="0.55"/>
<rect x="662.0" y="715" width="1.3" height="128" fill="url(#sb)" opacity="0.55"/>
<rect x="709.0" y="715" width="1.3" height="134" fill="url(#sb)" opacity="0.55"/>
<rect x="692.0" y="715" width="1.3" height="136" fill="url(#sb)" opacity="0.55"/>
<rect x="265.2" y="789" width="1.8" height="35" fill="url(#sb)" opacity="0.55"/>
<rect x="261.7" y="616" width="0.9" height="187" fill="url(#sb)" opacity="0.55"/>
<rect x="275.3" y="664" width="1" height="102" fill="url(#sb)" opacity="0.55"/>
<rect x="149.9" y="607" width="1.2" height="101" fill="url(#sb)" opacity="0.56"/>
<rect x="106.3" y="638" width="1.4" height="158" fill="url(#sb)" opacity="0.56"/>
<rect x="507.2" y="768" width="1" height="47" fill="url(#sb)" opacity="0.56"/>
<rect x="131.6" y="662" width="1.8" height="144" fill="url(#sb)" opacity="0.56"/>
<rect x="349.0" y="732" width="1.5" height="94" fill="url(#sl)" opacity="0.56"/>
<rect x="539.3" y="736" width="1.5" height="88" fill="url(#sl)" opacity="0.56"/>
<rect x="442.6" y="776" width="1.2" height="69" fill="url(#sl)" opacity="0.57"/>
<rect x="122.6" y="763" width="1" height="53" fill="url(#sb)" opacity="0.57"/>
<rect x="213.7" y="765" width="1.2" height="64" fill="url(#sl)" opacity="0.57"/>
<rect x="317.5" y="765" width="1.8" height="40" fill="url(#sl)" opacity="0.57"/>
<rect x="502.6" y="712" width="1.8" height="88" fill="url(#sl)" opacity="0.57"/>
<rect x="418.3" y="771" width="1" height="51" fill="url(#sl)" opacity="0.57"/>
<rect x="424.5" y="799" width="1.8" height="53" fill="url(#sb)" opacity="0.57"/>
<rect x="527.2" y="694" width="1.6" height="106" fill="url(#sb)" opacity="0.58"/>
<rect x="305.8" y="739" width="1.5" height="57" fill="url(#sl)" opacity="0.58"/>
<rect x="443.9" y="704" width="0.9" height="67" fill="url(#sb)" opacity="0.58"/>
<rect x="344.9" y="761" width="1.5" height="66" fill="url(#sl)" opacity="0.58"/>
<rect x="203.5" y="783" width="1.5" height="53" fill="url(#sb)" opacity="0.58"/>
<rect x="431.9" y="766" width="1.5" height="31" fill="url(#sb)" opacity="0.58"/>
<rect x="204.2" y="762" width="1.8" height="80" fill="url(#sb)" opacity="0.58"/>
<rect x="236.4" y="810" width="1.8" height="31" fill="url(#sb)" opacity="0.59"/>
<rect x="400.5" y="739" width="1.2" height="84" fill="url(#sb)" opacity="0.59"/>
<rect x="210.8" y="763" width="1" height="69" fill="url(#sb)" opacity="0.59"/>
<rect x="202.4" y="767" width="1.5" height="69" fill="url(#sb)" opacity="0.59"/>
<rect x="243.5" y="610" width="1" height="90" fill="url(#sb)" opacity="0.60"/>
<rect x="124.8" y="603" width="1.4" height="153" fill="url(#sb)" opacity="0.60"/>
<rect x="117.8" y="593" width="1.6" height="169" fill="url(#sl)" opacity="0.60"/>
<rect x="342.6" y="738" width="1.5" height="31" fill="url(#sb)" opacity="0.60"/>
<rect x="238.2" y="647" width="0.9" height="126" fill="url(#sb)" opacity="0.60"/>
<rect x="260.7" y="743" width="1" height="72" fill="url(#sb)" opacity="0.61"/>
<rect x="521.8" y="795" width="1.5" height="36" fill="url(#sb)" opacity="0.61"/>
<rect x="460.7" y="747" width="1.5" height="31" fill="url(#sl)" opacity="0.61"/>
<rect x="275.4" y="648" width="0.9" height="104" fill="url(#sb)" opacity="0.62"/>
<rect x="278.9" y="648" width="1.6" height="171" fill="url(#sb)" opacity="0.62"/>
<rect x="155.0" y="747" width="1.5" height="94" fill="url(#sb)" opacity="0.62"/>
<rect x="117.9" y="791" width="1.5" height="46" fill="url(#sb)" opacity="0.62"/>
<rect x="478.4" y="776" width="1.8" height="74" fill="url(#sb)" opacity="0.62"/>
<rect x="519.2" y="696" width="1.8" height="88" fill="url(#sb)" opacity="0.63"/>
<rect x="225.2" y="747" width="1.2" height="87" fill="url(#sb)" opacity="0.63"/>
<rect x="178.0" y="764" width="1.5" height="81" fill="url(#sl)" opacity="0.63"/>
<rect x="309.3" y="758" width="1.5" height="63" fill="url(#sb)" opacity="0.64"/>
<rect x="195.8" y="767" width="1" height="54" fill="url(#sb)" opacity="0.64"/>
<rect x="286.8" y="739" width="1" height="73" fill="url(#sl)" opacity="0.64"/>
<rect x="286.9" y="722" width="1.4" height="96" fill="url(#sb)" opacity="0.65"/>
<rect x="448.0" y="764" width="1.5" height="84" fill="url(#sb)" opacity="0.65"/>
<rect x="536.8" y="754" width="1.5" height="59" fill="url(#sb)" opacity="0.65"/>
<rect x="441.8" y="708" width="1.2" height="77" fill="url(#sb)" opacity="0.66"/>
<rect x="326.3" y="657" width="1.8" height="152" fill="url(#sb)" opacity="0.66"/>
<rect x="453.6" y="748" width="1.8" height="41" fill="url(#sb)" opacity="0.66"/>
<rect x="202.7" y="722" width="1" height="80" fill="url(#sb)" opacity="0.67"/>
<rect x="487.1" y="768" width="1.5" height="54" fill="url(#sl)" opacity="0.67"/>
<rect x="341.5" y="748" width="1.5" height="32" fill="url(#sb)" opacity="0.67"/>
<rect x="179.7" y="799" width="1.5" height="37" fill="url(#sb)" opacity="0.68"/>
<rect x="129.4" y="653" width="1.6" height="117" fill="url(#sb)" opacity="0.68"/>
<rect x="307.1" y="667" width="0.9" height="112" fill="url(#sl)" opacity="0.68"/>
<rect x="202.2" y="637" width="1.8" height="144" fill="url(#sl)" opacity="0.68"/>
<rect x="296.5" y="668" width="1.2" height="147" fill="url(#sb)" opacity="0.68"/>
<rect x="230.6" y="778" width="1" height="59" fill="url(#sb)" opacity="0.69"/>
<rect x="403.8" y="746" width="1.5" height="69" fill="url(#sb)" opacity="0.69"/>
<rect x="165.6" y="670" width="0.9" height="160" fill="url(#sb)" opacity="0.69"/>
<rect x="261.8" y="775" width="1.2" height="52" fill="url(#sb)" opacity="0.69"/>
<rect x="519.1" y="740" width="1" height="62" fill="url(#sb)" opacity="0.69"/>
<rect x="240.7" y="621" width="1.2" height="120" fill="url(#sb)" opacity="0.69"/>
<rect x="302.2" y="730" width="1" height="68" fill="url(#sb)" opacity="0.70"/>
<rect x="275.2" y="738" width="1.5" height="90" fill="url(#sb)" opacity="0.70"/>
<rect x="158.2" y="789" width="1.8" height="38" fill="url(#sb)" opacity="0.70"/>
<rect x="245.2" y="767" width="1.5" height="70" fill="url(#sb)" opacity="0.70"/>
<rect x="139.4" y="603" width="1.6" height="103" fill="url(#sb)" opacity="0.71"/>
<rect x="395.0" y="729" width="1.5" height="36" fill="url(#sl)" opacity="0.71"/>
<rect x="471.7" y="768" width="1.8" height="76" fill="url(#sb)" opacity="0.71"/>
<rect x="236.8" y="617" width="1.4" height="118" fill="url(#sb)" opacity="0.71"/>
<rect x="479.6" y="687" width="1.2" height="94" fill="url(#sl)" opacity="0.72"/>
<rect x="232.0" y="592" width="1.6" height="119" fill="url(#sl)" opacity="0.72"/>
<rect x="134.7" y="775" width="1.5" height="56" fill="url(#sb)" opacity="0.72"/>
<rect x="278.6" y="673" width="1.6" height="130" fill="url(#sl)" opacity="0.72"/>
<rect x="287.8" y="640" width="1.8" height="162" fill="url(#sb)" opacity="0.72"/>
<rect x="307.5" y="732" width="1.2" height="69" fill="url(#sb)" opacity="0.72"/>
<rect x="323.9" y="758" width="1" height="38" fill="url(#sb)" opacity="0.72"/>
<rect x="311.0" y="628" width="1.4" height="107" fill="url(#sl)" opacity="0.73"/>
<rect x="113.8" y="766" width="1.8" height="56" fill="url(#sb)" opacity="0.73"/>
<rect x="128.5" y="764" width="1.2" height="77" fill="url(#sb)" opacity="0.74"/>
<rect x="461.7" y="778" width="1.5" height="77" fill="url(#sb)" opacity="0.74"/>
<rect x="103.5" y="760" width="1.5" height="71" fill="url(#sb)" opacity="0.74"/>
<rect x="237.0" y="765" width="1" height="44" fill="url(#sb)" opacity="0.74"/>
<rect x="361.8" y="727" width="1.2" height="92" fill="url(#sb)" opacity="0.74"/>
<rect x="109.8" y="577" width="1.2" height="109" fill="url(#sb)" opacity="0.74"/>
<rect x="251.4" y="630" width="1.8" height="185" fill="url(#sl)" opacity="0.75"/>
<rect x="346.7" y="685" width="1.2" height="89" fill="url(#sb)" opacity="0.75"/>
<rect x="243.5" y="668" width="0.9" height="155" fill="url(#sb)" opacity="0.75"/>
<rect x="230.2" y="649" width="1.4" height="110" fill="url(#sb)" opacity="0.76"/>
<rect x="518.3" y="703" width="1.8" height="60" fill="url(#sb)" opacity="0.76"/>
<rect x="356.4" y="756" width="1.5" height="53" fill="url(#sb)" opacity="0.76"/>
<rect x="412.3" y="732" width="1.5" height="49" fill="url(#sb)" opacity="0.77"/>
<rect x="163.0" y="640" width="1.2" height="188" fill="url(#sl)" opacity="0.77"/>
<rect x="160.6" y="657" width="1.2" height="148" fill="url(#sl)" opacity="0.77"/>
<rect x="151.7" y="593" width="1.4" height="108" fill="url(#sl)" opacity="0.77"/>
<rect x="119.7" y="796" width="1.2" height="46" fill="url(#sb)" opacity="0.77"/>
<rect x="543.7" y="694" width="1" height="65" fill="url(#sb)" opacity="0.77"/>
<rect x="241.7" y="633" width="0.9" height="183" fill="url(#sl)" opacity="0.77"/>
<rect x="289.6" y="723" width="1" height="92" fill="url(#sb)" opacity="0.78"/>
<rect x="185.0" y="816" width="1" height="31" fill="url(#sb)" opacity="0.78"/>
<rect x="442.8" y="703" width="1" height="72" fill="url(#sb)" opacity="0.78"/>
<rect x="161.5" y="757" width="1" height="54" fill="url(#sl)" opacity="0.78"/>
<rect x="265.1" y="759" width="1.8" height="62" fill="url(#sb)" opacity="0.79"/>
<rect x="160.9" y="774" width="1.5" height="60" fill="url(#sb)" opacity="0.79"/>
<rect x="122.4" y="751" width="1" height="63" fill="url(#sb)" opacity="0.79"/>
<rect x="133.1" y="619" width="1.4" height="177" fill="url(#sb)" opacity="0.80"/>
<rect x="191.9" y="785" width="1.5" height="51" fill="url(#sb)" opacity="0.80"/>
<rect x="448.4" y="763" width="1.5" height="92" fill="url(#sb)" opacity="0.80"/>
<rect x="274.8" y="752" width="1.2" height="63" fill="url(#sb)" opacity="0.81"/>
<rect x="157.9" y="774" width="1.2" height="53" fill="url(#sb)" opacity="0.81"/>
<rect x="352.8" y="742" width="1.8" height="40" fill="url(#sl)" opacity="0.81"/>
<rect x="405.9" y="784" width="1" height="36" fill="url(#sb)" opacity="0.81"/>
<rect x="253.2" y="629" width="1.2" height="99" fill="url(#sl)" opacity="0.82"/>
<rect x="238.2" y="593" width="1" height="103" fill="url(#sb)" opacity="0.82"/>
<rect x="320.3" y="607" width="1.4" height="102" fill="url(#sl)" opacity="0.82"/>
<rect x="372.5" y="720" width="1.5" height="36" fill="url(#sb)" opacity="0.82"/>
<rect x="142.1" y="646" width="1.8" height="162" fill="url(#sl)" opacity="0.83"/>
<rect x="507.9" y="731" width="1.8" height="85" fill="url(#sb)" opacity="0.83"/>
<rect x="417.3" y="749" width="1.5" height="80" fill="url(#sb)" opacity="0.83"/>
<rect x="147.1" y="651" width="0.9" height="170" fill="url(#sb)" opacity="0.84"/>
<rect x="332.7" y="689" width="1.8" height="53" fill="url(#sb)" opacity="0.84"/>
<rect x="190.5" y="629" width="1.6" height="92" fill="url(#sb)" opacity="0.85"/>
<rect x="400.9" y="726" width="1.8" height="64" fill="url(#sb)" opacity="0.85"/>
<rect x="247.4" y="790" width="1.5" height="50" fill="url(#sl)" opacity="0.85"/>
<rect x="128.0" y="622" width="1.4" height="90" fill="url(#sb)" opacity="0.86"/>
<rect x="218.6" y="618" width="1" height="133" fill="url(#sb)" opacity="0.86"/>
<rect x="290.3" y="653" width="1.4" height="152" fill="url(#sb)" opacity="0.86"/>
<rect x="214.1" y="797" width="1" height="32" fill="url(#sb)" opacity="0.86"/>
<rect x="301.5" y="632" width="1" height="132" fill="url(#sl)" opacity="0.86"/>
<rect x="161.7" y="625" width="1" height="121" fill="url(#sb)" opacity="0.86"/>
<rect x="316.1" y="641" width="1.6" height="122" fill="url(#sb)" opacity="0.87"/>
<rect x="355.1" y="787" width="1.5" height="44" fill="url(#sb)" opacity="0.87"/>
<rect x="362.2" y="760" width="1.8" height="34" fill="url(#sb)" opacity="0.87"/>
<rect x="252.8" y="737" width="1.2" height="86" fill="url(#sb)" opacity="0.87"/>
<rect x="296.8" y="654" width="1.6" height="102" fill="url(#sl)" opacity="0.88"/>
<rect x="466.4" y="770" width="1.5" height="39" fill="url(#sb)" opacity="0.88"/>
<rect x="160.6" y="728" width="1" height="94" fill="url(#sb)" opacity="0.88"/>
<rect x="525.9" y="725" width="1.5" height="79" fill="url(#sb)" opacity="0.88"/>
<rect x="481.0" y="691" width="1.5" height="89" fill="url(#sl)" opacity="0.88"/>
<rect x="149.6" y="585" width="1" height="149" fill="url(#sb)" opacity="0.89"/>
<rect x="289.2" y="634" width="1.6" height="152" fill="url(#sb)" opacity="0.89"/>
<rect x="402.9" y="718" width="1" height="92" fill="url(#sb)" opacity="0.89"/>
<rect x="310.1" y="644" width="1.4" height="104" fill="url(#sb)" opacity="0.90"/>
<rect x="156.8" y="618" width="1.8" height="143" fill="url(#sb)" opacity="0.90"/>
</svg></div>
</div>
<span class="t g-slide fitx" style="left:818.80px;top:744.50px;font-size:34.6px;line-height:34.6px;color:#151515;transform-origin:0 0;transform:scaleX(1.0925);-webkit-text-stroke:0.75px #fff;">WorldCorp</span>
<span class="t g-slide fitx" style="left:818.80px;top:798.70px;font-size:34.6px;line-height:34.6px;color:#151515;transform-origin:0 0;transform:scaleX(1.0343);-webkit-text-stroke:0.75px #fff;">April, 2021</span>
<span class="t g-slide" style="left:1107.53px;top:410.34px;font-size:78px;line-height:78px;color:#000;font-weight:bold;transform-origin:0 0;transform:scale(1.1732,0.9675);-webkit-text-stroke:2.6px #000;">y</span>
<span class="t g-slide" style="left:1102.12px;top:610.12px;font-size:78px;line-height:78px;color:#000;font-weight:bold;transform-origin:0 0;transform:scale(1.1056,0.9808);-webkit-text-stroke:2.6px #000;">g</span>
<span class="t g-slide" style="left:1080.75px;top:398.06px;font-size:78px;line-height:78px;color:#000;font-weight:bold;transform-origin:0 0;transform:scale(1.2500,1.1263);">l</span>
<span class="t g-slide" style="left:1045.60px;top:609.35px;font-size:78px;line-height:78px;color:#000;font-weight:bold;transform-origin:0 0;transform:scale(1.2000,0.9674);">n</span>
<div id="dialog">
  <div id="dtitle"></div>
</div>

<!-- dialog controls -->
<svg class="abs" style="left:285px;top:550px;" width="85" height="70" viewBox="285 550 85 70">
  <path d="M321.500 560.800 h24.500 l12.400 12.600 v37.400 h-36.900 z" fill="#fdfdfd" stroke="#a9a9a9" stroke-width="1.200" stroke-linejoin="round"/>
  <path d="M346 560.800 v12.600 h12.400" fill="none" stroke="#a9a9a9" stroke-width="1.200"/>
  <path d="M328 573.200 L340.500 580.300 M328 603.300 L342.700 599" stroke="#9a9a9a" stroke-width="0.700" stroke-dasharray="1.300 1.300" fill="none"/>
  <path d="M329.500 581.500 v15.300 h22" fill="none" stroke="#b0b0b0" stroke-width="1"/>
  <rect x="333.300" y="588" width="4.600" height="8.600" fill="#a463c3"/><rect x="339.900" y="582" width="4.600" height="14.600" fill="#3f73b7"/><rect x="346.200" y="586.200" width="4.600" height="10.400" fill="#64a88e"/>
  <rect x="295.800" y="573.600" width="31.500" height="29.500" fill="#fff" stroke="#a3a3a3" stroke-width="1.200"/>
  <rect x="295.200" y="573" width="32.700" height="5.600" fill="#3f73b7"/>
  <path d="M299.700 581.200 v15.600 h21.800" fill="none" stroke="#b0b0b0" stroke-width="1"/>
  <rect x="303.400" y="588" width="4.600" height="8.600" fill="#a463c3"/><rect x="309.800" y="582" width="4.600" height="14.600" fill="#3f73b7"/><rect x="316.100" y="586.200" width="4.700" height="10.400" fill="#64a88e"/>
</svg>

<svg class="abs" style="left:1045px;top:281px;" width="24" height="24" viewBox="0 0 24 24"><path d="M4.3 4 L19.7 19.4 M19.7 4 L4.3 19.4" stroke="#1a1a1a" stroke-width="1.35" fill="none"/></svg>
<svg class="abs" style="left:258px;top:355px;" width="26" height="58" viewBox="0 0 26 58">
  <circle cx="12.4" cy="12.6" r="9.7" fill="#fff" stroke="#3a3a3a" stroke-width="1.2"/>
  <circle cx="12.4" cy="44.7" r="9.7" fill="#fff" stroke="#3a3a3a" stroke-width="1.2"/>
  <circle cx="12.4" cy="44.7" r="5.2" fill="#2e2e2e"/>
</svg>
<div class="abs" style="left:289px;top:388px;width:115px;height:27px;box-sizing:border-box;border:1px dotted #222;"></div>
<div class="abs" style="left:418px;top:378.500px;width:513px;height:30.500px;box-sizing:border-box;background:#fff;border:1px solid #c4c4c4;border-bottom-color:#b3b3b3;"></div>
<div class="btn" style="left:419px;top:415px;width:115px;height:35px;"></div>
<div class="cb" style="left:549px;top:415px;width:21px;height:21px;"></div>
<div class="cb" style="left:944px;top:352px;width:21px;height:21px;"></div>
<div class="abs" style="left:260px;top:510px;width:671px;height:156px;box-sizing:border-box;border:1px solid #dcdcdc;"></div>
<div class="abs" style="left:270px;top:503px;width:52px;height:16px;background:#f0f0f0;"></div>
<div class="btn" style="left:838px;top:673.500px;width:114px;height:34.500px;border:2px solid #0078d7;"></div>
<div class="btn" style="left:968px;top:673.500px;width:114.500px;height:34.500px;"></div>

<span class="t g-dialog" style="left:262.00px;top:284.20px;font-size:18.6px;line-height:18.6px;letter-spacing:-0.187px;color:#262626;">Insert Object</span>
<span class="t g-dialog" style="left:980.90px;top:283.50px;font-size:20.6px;line-height:20.6px;letter-spacing:0.000px;color:#333;">?</span>
<span class="t g-dialog" style="left:291.00px;top:362.90px;font-size:16px;line-height:16px;letter-spacing:-0.285px;color:#1f1f1f;">Create <u>n</u>ew</span>
<span class="t g-dialog" style="left:291.00px;top:394.90px;font-size:16px;line-height:16px;letter-spacing:0.089px;color:#1f1f1f;">Create from <u>f</u>ile</span>
<span class="t g-dialog" style="left:419.20px;top:356.70px;font-size:16px;line-height:16px;letter-spacing:-0.145px;color:#1f1f1f;">Fil<u>e</u>:</span>
<span class="t g-dialog" style="left:445.00px;top:426.60px;font-size:16px;line-height:16px;letter-spacing:-0.405px;color:#1f1f1f;"><u>B</u>rowse...</span>
<span class="t g-dialog" style="left:579.60px;top:420.20px;font-size:16px;line-height:16px;letter-spacing:-0.084px;color:#8a8a8a;"><u>L</u>ink</span>
<span class="t g-dialog" style="left:975.20px;top:357.90px;font-size:16px;line-height:16px;letter-spacing:-0.072px;color:#8a8a8a;"><u>D</u>isplay as icon</span>
<span class="t g-dialog" style="left:273.20px;top:504.80px;font-size:16px;line-height:16px;letter-spacing:-0.301px;color:#1f1f1f;">Result</span>
<span class="t g-dialog" style="left:392.00px;top:541.20px;font-size:16px;line-height:16px;letter-spacing:0.052px;color:#1f1f1f;">Inserts the contents of the file as an object into your presentation so that</span>
<span class="t g-dialog" style="left:393.00px;top:563.60px;font-size:16px;line-height:16px;letter-spacing:0.039px;color:#1f1f1f;">you can activate it using the application that created it.</span>
<span class="t g-dialog" style="left:883.90px;top:684.40px;font-size:16px;line-height:16px;letter-spacing:-1.645px;color:#1f1f1f;">OK</span>
<span class="t g-dialog" style="left:1001.20px;top:684.40px;font-size:16px;line-height:16px;letter-spacing:-0.530px;color:#1f1f1f;">Cancel</span>

<svg class="abs" style="left:0;top:0;pointer-events:none;" width="1301" height="959" viewBox="0 0 1301 959">
  <rect x="116.400" y="4.700" width="80" height="45.700" fill="none" stroke="#f07339" stroke-width="8.200"/>
  <rect x="128" y="36" width="56" height="4.5" fill="#b7472a"/>
  <ellipse cx="1258" cy="135" rx="28.050" ry="21.900" fill="none" stroke="#f0733a" stroke-width="8.100" transform="rotate(-1.500 1258 135)"/>
  <path d="M415.8 490 L356 438.5" stroke="#f07238" stroke-width="6.2" fill="none"/>
  <path d="M342 427 L371.3 436.2 L362 441.5 L354.4 452.8 Z" fill="#f07238"/>
</svg>

</body>
</html>
